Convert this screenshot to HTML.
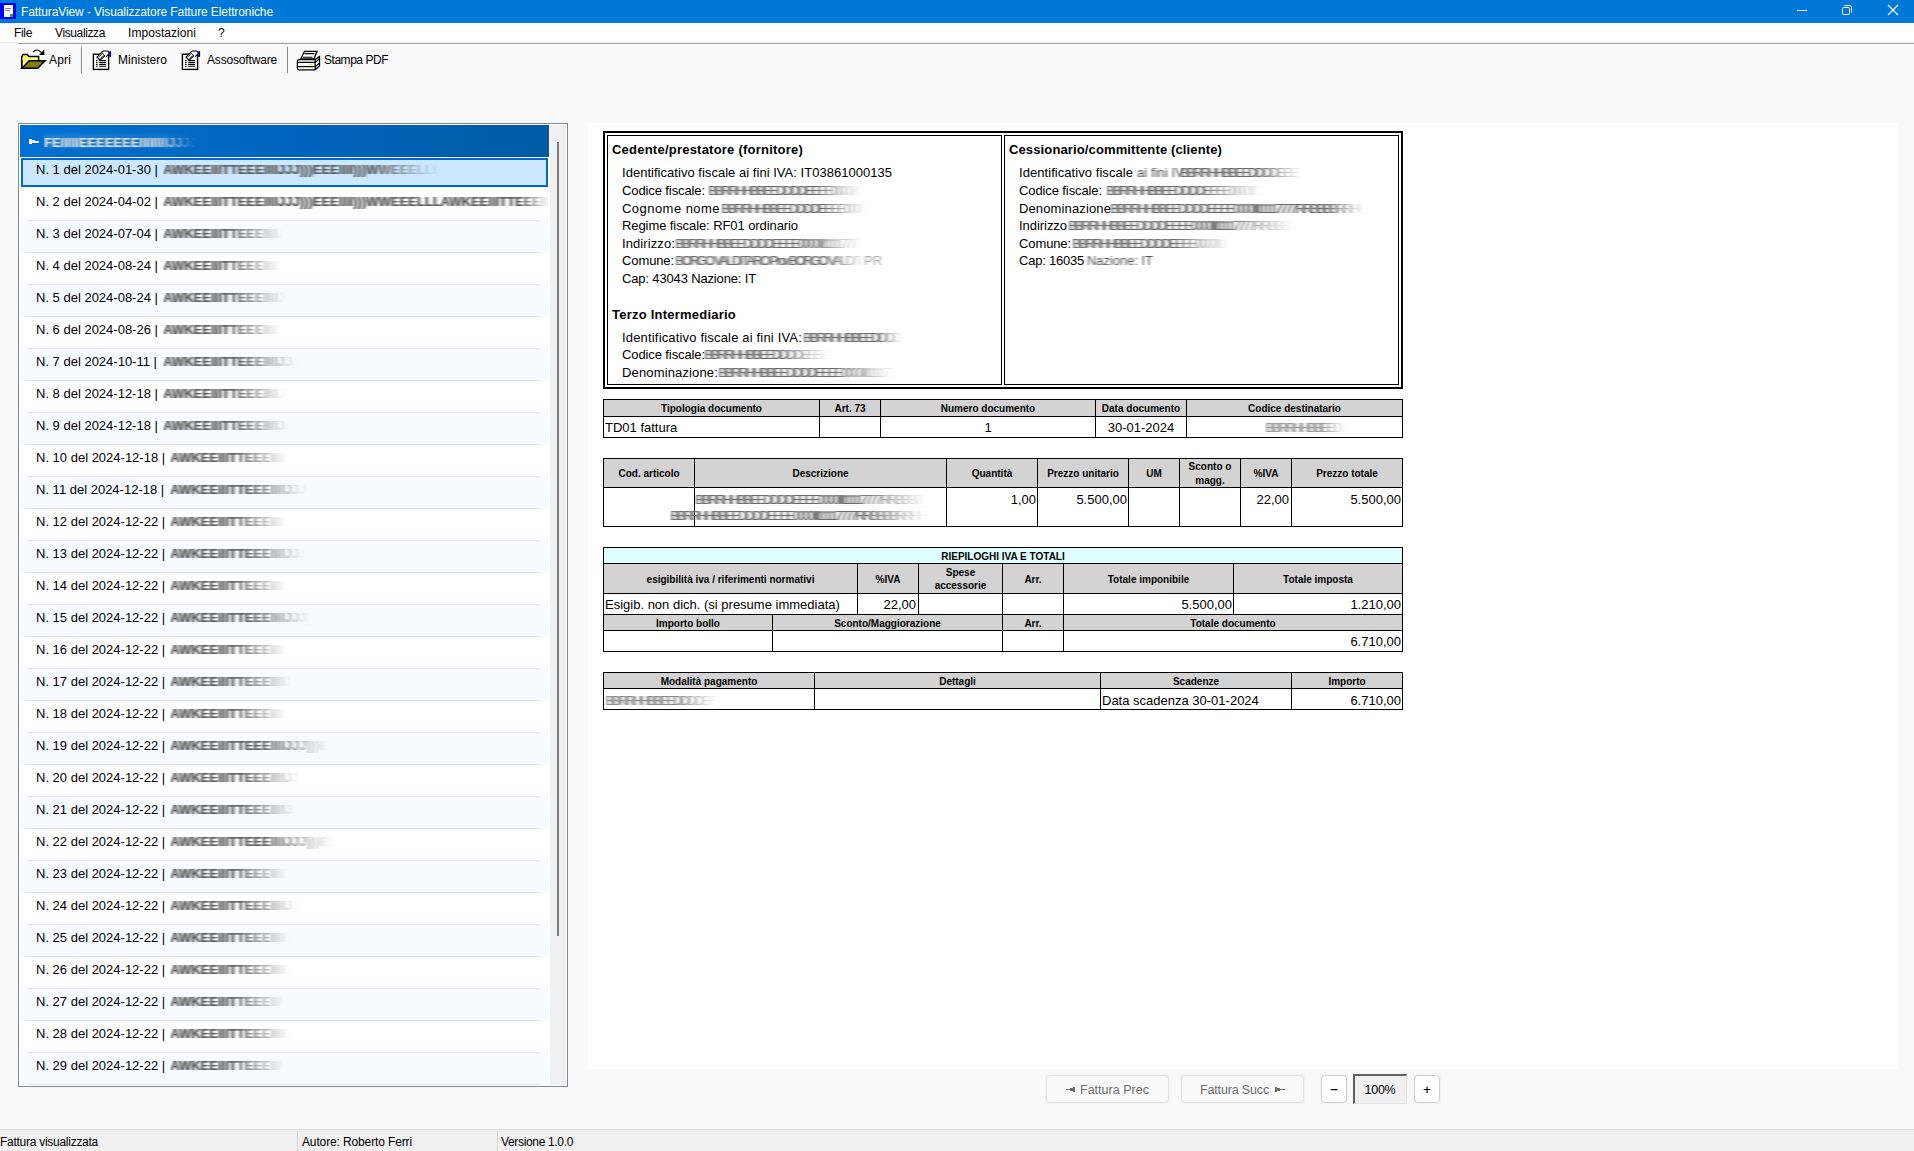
<!DOCTYPE html>
<html><head><meta charset="utf-8">
<style>
*{margin:0;padding:0;box-sizing:border-box}
html,body{width:1914px;height:1151px;overflow:hidden;background:#f9f9f9;font-family:"Liberation Sans", sans-serif;color:#000;position:relative}
.a{position:absolute}
.t{white-space:nowrap}
.bl{background:linear-gradient(to right,rgba(70,70,70,.75),rgba(90,90,90,.55) 70%,rgba(120,120,120,0));filter:blur(1.5px);border-radius:2px}
.blg{background:linear-gradient(to right,rgba(120,120,120,.45),rgba(140,140,140,.35) 75%,rgba(160,160,160,0));filter:blur(1.5px)}
.blw{background:linear-gradient(to right,rgba(255,255,255,.8),rgba(255,255,255,.5) 70%,rgba(255,255,255,0));filter:blur(2px)}
</style></head><body>
<svg width="0" height="0" style="position:absolute"><defs>
<filter id="hb1" x="-20%" y="-50%" width="140%" height="200%"><feGaussianBlur stdDeviation="1.4 0.25"/></filter>
<filter id="hb0" x="-20%" y="-50%" width="140%" height="200%"><feGaussianBlur stdDeviation="0.8 0.2"/></filter>
<filter id="hb3" x="-20%" y="-50%" width="140%" height="200%"><feGaussianBlur stdDeviation="1.0 0.1"/></filter>
<filter id="hb2" x="-20%" y="-50%" width="140%" height="200%"><feGaussianBlur stdDeviation="2.5 0.5"/></filter>
</defs></svg>
<div class="a" style="left:0px;top:0px;width:1914px;height:23px;background:#0078d7"></div>
<div class="a" style="left:0px;top:3px;width:16px;height:16px;background:#0000ff"></div>
<div class="a" style="left:4px;top:5px;width:9px;height:12px;background:#fff"></div>
<div class="a" style="left:5px;top:8px;width:6px;height:1px;background:#8080ff"></div>
<div class="a" style="left:5px;top:10px;width:5px;height:1px;background:#8080ff"></div>
<div class="a" style="left:10px;top:14px;width:3px;height:3px;background:#1d8a5a;border-radius:1px"></div>
<div class="a t" style="left:21.00px;top:5.84px;font-size:12px;line-height:12px;color:#fff;letter-spacing:-0.102px;">FatturaView - Visualizzatore Fatture Elettroniche</div>
<svg class="a" style="left:1780px;top:0px" width="134" height="23" viewBox="1780 0 134 23"><rect x="1797" y="10" width="10" height="1" fill="#fff"/><rect x="1842.5" y="7.5" width="7" height="7" rx="1.2" fill="none" stroke="#fff" stroke-width="1"/><path d="M1844.5 5.5 h5 a2 2 0 0 1 2 2 v5" fill="none" stroke="#fff" stroke-width="1"/><path d="M1888 5 L1898 15 M1898 5 L1888 15" stroke="#fff" stroke-width="1.1"/></svg>
<div class="a" style="left:0px;top:23px;width:1914px;height:19px;background:#fff"></div>
<div class="a t" style="left:14.00px;top:26.84px;font-size:12px;line-height:12px;color:#000;letter-spacing:-0.336px;">File</div>
<div class="a t" style="left:55.00px;top:26.84px;font-size:12px;line-height:12px;color:#000;letter-spacing:-0.381px;">Visualizza</div>
<div class="a t" style="left:128.00px;top:26.84px;font-size:12px;line-height:12px;color:#000;letter-spacing:0.052px;">Impostazioni</div>
<div class="a t" style="left:218.00px;top:26.84px;font-size:12px;line-height:12px;color:#000;">?</div>
<div class="a" style="left:0px;top:42px;width:1914px;height:1px;background:#f0f0f0"></div>
<div class="a" style="left:18px;top:43px;width:1896px;height:1px;background:#a0a0a0"></div>
<div class="a" style="left:18px;top:44px;width:1896px;height:1px;background:#fff"></div>
<svg class="a" style="left:18px;top:46px" width="30" height="26" viewBox="18 46 30 26">
<defs><pattern id="chk" x="0" y="0" width="2" height="2" patternUnits="userSpaceOnUse"><rect width="2" height="2" fill="#ffff00"/><rect width="1" height="1" fill="#fff"/><rect x="1" y="1" width="1" height="1" fill="#fff"/></pattern></defs>
<path d="M21.7 68.5 V56.8 L23.2 54.4 H27.3 L28.8 56.4 H38.6 V60.5" fill="url(#chk)" stroke="#000" stroke-width="1.5"/>
<path d="M21.7 60 V68" stroke="#000" stroke-width="1.5"/>
<path d="M22 68.3 L29.2 60.8 H45 L37.7 68.3 Z" fill="#808000" stroke="#000" stroke-width="1.6" stroke-linejoin="miter"/>
<path d="M33 52.2 Q37 47.6 41.5 52.6" fill="none" stroke="#000" stroke-width="1.2"/>
<path d="M39 54.9 L44.3 49.6 V54.9 Z" fill="#000"/>
</svg>
<div class="a t" style="left:49.00px;top:53.84px;font-size:12px;line-height:12px;color:#000;letter-spacing:0.164px;">Apri</div>
<div class="a" style="left:81px;top:47px;width:1px;height:26px;background:#8c8c8c"></div>
<svg class="a" style="left:92px;top:48px" width="22" height="24" viewBox="0 -2 22 24">
<rect x="1.4" y="4.2" width="15.2" height="15.2" fill="#fff" stroke="#000" stroke-width="1.4"/>
<path d="M4 10.6 h1.6 M7.2 10.6 h6.8 M4 12.5 h1.6 M7.2 12.5 h6.8 M4 14.4 h1.6 M7.2 14.4 h6.8 M4 16.3 h1.6 M7.2 16.3 h6.8" stroke="#000" stroke-width="1.1"/>
<path d="M5 7.2 L9.8 2.4 L13 5.6 L8.2 10.2 Z" fill="#fff" stroke="#000" stroke-width="1.1"/>
<path d="M6.8 7 L9.8 4 M8.3 8.5 L11.3 5.5" stroke="#000" stroke-width="0.8"/>
<path d="M9.8 2.4 L11.2 1 H15.8 L17 2.4 V3.8 L14.2 6.6" fill="#fff" stroke="#000" stroke-width="1.1"/>
<rect x="17.2" y="1.2" width="1.9" height="5.7" fill="#00007f"/>
</svg>
<div class="a t" style="left:118.00px;top:53.84px;font-size:12px;line-height:12px;color:#000;letter-spacing:0.035px;">Ministero</div>
<svg class="a" style="left:181px;top:48px" width="22" height="24" viewBox="0 -2 22 24">
<rect x="1.4" y="4.2" width="15.2" height="15.2" fill="#fff" stroke="#000" stroke-width="1.4"/>
<path d="M4 10.6 h1.6 M7.2 10.6 h6.8 M4 12.5 h1.6 M7.2 12.5 h6.8 M4 14.4 h1.6 M7.2 14.4 h6.8 M4 16.3 h1.6 M7.2 16.3 h6.8" stroke="#000" stroke-width="1.1"/>
<path d="M5 7.2 L9.8 2.4 L13 5.6 L8.2 10.2 Z" fill="#fff" stroke="#000" stroke-width="1.1"/>
<path d="M6.8 7 L9.8 4 M8.3 8.5 L11.3 5.5" stroke="#000" stroke-width="0.8"/>
<path d="M9.8 2.4 L11.2 1 H15.8 L17 2.4 V3.8 L14.2 6.6" fill="#fff" stroke="#000" stroke-width="1.1"/>
<rect x="17.2" y="1.2" width="1.9" height="5.7" fill="#00007f"/>
</svg>
<div class="a t" style="left:207.00px;top:53.84px;font-size:12px;line-height:12px;color:#000;letter-spacing:-0.169px;">Assosoftware</div>
<div class="a" style="left:287px;top:47px;width:1px;height:26px;background:#8c8c8c"></div>
<svg class="a" style="left:294px;top:48px" width="30" height="25" viewBox="294 48 30 25">
<path d="M304.5 51.3 H317 L314 58.8 H300.8 Z" fill="#fff" stroke="#000" stroke-width="1.3"/>
<path d="M304.5 53.6 H314.5 M303 57.3 H312.5" stroke="#000" stroke-width="1.1"/>
<path d="M299 59.6 H315.2 L319.5 56.5 V66 L315 69.8 H299 Q297.4 69.8 297.4 68 V61.4 Q297.4 59.6 299 59.6 Z" fill="#fff" stroke="#000" stroke-width="1.3"/>
<path d="M297.4 62.4 H315.2 L319.5 58.8 M297.4 66.6 H315.2 L319.5 63 M315.2 59.6 V69.8" fill="none" stroke="#000" stroke-width="1.2"/>
<rect x="309.2" y="63.8" width="2.9" height="1.1" fill="#e0e000"/>
</svg>
<div class="a t" style="left:324.00px;top:53.84px;font-size:12px;line-height:12px;color:#000;letter-spacing:-0.470px;">Stampa PDF</div>
<div class="a" style="left:18px;top:123px;width:550px;height:964px;border:1px solid #828790;background:#fff"></div>
<div class="a" style="left:550px;top:125px;width:16px;height:960px;background:#f0f0f0"></div>
<div class="a" style="left:557px;top:142px;width:2px;height:794px;background:#7a7a7a"></div>
<div class="a" style="left:21px;top:158px;width:527px;height:29px;border:2px solid #0067cc;background:#cce8ff"></div>
<div class="a t" style="left:36.00px;top:163.00px;font-size:13px;line-height:13px;color:#000;">N. 1 del 2024-01-30 |</div>
<div class="a" style="left:163px;top:159.00px;width:277px;height:21px;overflow:hidden;-webkit-mask-image:linear-gradient(to right,#000 75%,transparent)"><div class="a t" style="left:0;top:4px;font-size:13px;line-height:13px;font-weight:bold;color:#5e5e5e;letter-spacing:0px;text-shadow:1.5px 0 0 rgba(90,90,90,.35),3px 0 0 rgba(110,110,110,.18);filter:url(#hb0)">AWKEEIIITTEEEIIIIJJJ)))EEEIIII)))WWEEELLLAWKEEIIITTEEEIIIIJJJ)))EEEIIII)))WWEEELLLAWKEEIIITTEEEIIIIJJJ)))EEEIIII)))WWEEELLLAWKEEIIITTEEEIIIIJJJ)))EEEIIII)))WWEEELLLAWKEEIIITTEEEIIIIJJJ)))EEEIIII)))WWEEELLLAWKEEIIITTEEEIIIIJJJ)))EEEIIII)))WWEEELLLAWKEEIIITTEEEIIIIJJJ)))EEEIIII)))WWEEELLLAWKEEIIITTEEEIIIIJJJ)))EEEIIII)))WWEEELLLAWKEEIIITTEEEIIIIJJJ)))EEEIIII)))WWEEELLLAWKEEIIITTEEEIIIIJJJ)))EEEIIII)))WWEEELLLAWKEEIIITTEEEIIIIJJJ)))EEEIIII)))WWEEELLLAWKEEIIITTEEEIIIIJJJ)))EEEIIII)))WWEEELLLAWKEEIIITTEEEIIIIJJJ)))EEEIIII)))WWEEELLLAWKEEIIITTEEEIIIIJJJ)))EEEIIII)))WWEEELLLAWKEEIIITTEEEIIIIJJJ)))EEEIIII)))WWEEELLLAWKEEIIITTEEEIIIIJJJ)))EEEIIII)))WWEEELLLAWKEEIIITTEEEIIIIJJJ)))EEEIIII)))WWEEELLLAWKEEIIITTEEEIIIIJJJ)))EEEIIII)))WWEEELLLAWKEEIIITTEEEIIIIJJJ)))EEEIIII)))WWEEELLLAWKEEIIITTEEEIIIIJJJ)))EEEIIII)))WWEEELLL</div></div>
<div class="a" style="left:28px;top:220px;width:513px;height:1px;background:#e3e3e3"></div>
<div class="a t" style="left:36.00px;top:195.00px;font-size:13px;line-height:13px;color:#000;">N. 2 del 2024-04-02 |</div>
<div class="a" style="left:163px;top:191.00px;width:387px;height:21px;overflow:hidden;-webkit-mask-image:linear-gradient(to right,#000 92%,transparent)"><div class="a t" style="left:0;top:4px;font-size:13px;line-height:13px;font-weight:bold;color:#5e5e5e;letter-spacing:0px;text-shadow:1.5px 0 0 rgba(90,90,90,.35),3px 0 0 rgba(110,110,110,.18);filter:url(#hb0)">AWKEEIIITTEEEIIIIJJJ)))EEEIIII)))WWEEELLLAWKEEIIITTEEEIIIIJJJ)))EEEIIII)))WWEEELLLAWKEEIIITTEEEIIIIJJJ)))EEEIIII)))WWEEELLLAWKEEIIITTEEEIIIIJJJ)))EEEIIII)))WWEEELLLAWKEEIIITTEEEIIIIJJJ)))EEEIIII)))WWEEELLLAWKEEIIITTEEEIIIIJJJ)))EEEIIII)))WWEEELLLAWKEEIIITTEEEIIIIJJJ)))EEEIIII)))WWEEELLLAWKEEIIITTEEEIIIIJJJ)))EEEIIII)))WWEEELLLAWKEEIIITTEEEIIIIJJJ)))EEEIIII)))WWEEELLLAWKEEIIITTEEEIIIIJJJ)))EEEIIII)))WWEEELLLAWKEEIIITTEEEIIIIJJJ)))EEEIIII)))WWEEELLLAWKEEIIITTEEEIIIIJJJ)))EEEIIII)))WWEEELLLAWKEEIIITTEEEIIIIJJJ)))EEEIIII)))WWEEELLLAWKEEIIITTEEEIIIIJJJ)))EEEIIII)))WWEEELLLAWKEEIIITTEEEIIIIJJJ)))EEEIIII)))WWEEELLLAWKEEIIITTEEEIIIIJJJ)))EEEIIII)))WWEEELLLAWKEEIIITTEEEIIIIJJJ)))EEEIIII)))WWEEELLLAWKEEIIITTEEEIIIIJJJ)))EEEIIII)))WWEEELLLAWKEEIIITTEEEIIIIJJJ)))EEEIIII)))WWEEELLLAWKEEIIITTEEEIIIIJJJ)))EEEIIII)))WWEEELLL</div></div>
<div class="a" style="left:20px;top:221px;width:529px;height:32px;background:#f7faff"></div>
<div class="a" style="left:28px;top:252px;width:513px;height:1px;background:#e3e3e3"></div>
<div class="a t" style="left:36.00px;top:227.00px;font-size:13px;line-height:13px;color:#000;">N. 3 del 2024-07-04 |</div>
<div class="a" style="left:163px;top:223.00px;width:120px;height:21px;overflow:hidden;-webkit-mask-image:linear-gradient(to right,#000 55%,transparent)"><div class="a t" style="left:0;top:4px;font-size:13px;line-height:13px;font-weight:bold;color:#5e5e5e;letter-spacing:0px;text-shadow:1.5px 0 0 rgba(90,90,90,.35),3px 0 0 rgba(110,110,110,.18);filter:url(#hb0)">AWKEEIIITTEEEIIIIJJJ)))EEEIIII)))WWEEELLLAWKEEIIITTEEEIIIIJJJ)))EEEIIII)))WWEEELLLAWKEEIIITTEEEIIIIJJJ)))EEEIIII)))WWEEELLLAWKEEIIITTEEEIIIIJJJ)))EEEIIII)))WWEEELLLAWKEEIIITTEEEIIIIJJJ)))EEEIIII)))WWEEELLLAWKEEIIITTEEEIIIIJJJ)))EEEIIII)))WWEEELLLAWKEEIIITTEEEIIIIJJJ)))EEEIIII)))WWEEELLLAWKEEIIITTEEEIIIIJJJ)))EEEIIII)))WWEEELLLAWKEEIIITTEEEIIIIJJJ)))EEEIIII)))WWEEELLLAWKEEIIITTEEEIIIIJJJ)))EEEIIII)))WWEEELLLAWKEEIIITTEEEIIIIJJJ)))EEEIIII)))WWEEELLLAWKEEIIITTEEEIIIIJJJ)))EEEIIII)))WWEEELLLAWKEEIIITTEEEIIIIJJJ)))EEEIIII)))WWEEELLLAWKEEIIITTEEEIIIIJJJ)))EEEIIII)))WWEEELLLAWKEEIIITTEEEIIIIJJJ)))EEEIIII)))WWEEELLLAWKEEIIITTEEEIIIIJJJ)))EEEIIII)))WWEEELLLAWKEEIIITTEEEIIIIJJJ)))EEEIIII)))WWEEELLLAWKEEIIITTEEEIIIIJJJ)))EEEIIII)))WWEEELLLAWKEEIIITTEEEIIIIJJJ)))EEEIIII)))WWEEELLLAWKEEIIITTEEEIIIIJJJ)))EEEIIII)))WWEEELLL</div></div>
<div class="a" style="left:28px;top:284px;width:513px;height:1px;background:#e3e3e3"></div>
<div class="a t" style="left:36.00px;top:259.00px;font-size:13px;line-height:13px;color:#000;">N. 4 del 2024-08-24 |</div>
<div class="a" style="left:163px;top:255.00px;width:117px;height:21px;overflow:hidden;-webkit-mask-image:linear-gradient(to right,#000 55%,transparent)"><div class="a t" style="left:0;top:4px;font-size:13px;line-height:13px;font-weight:bold;color:#5e5e5e;letter-spacing:0px;text-shadow:1.5px 0 0 rgba(90,90,90,.35),3px 0 0 rgba(110,110,110,.18);filter:url(#hb0)">AWKEEIIITTEEEIIIIJJJ)))EEEIIII)))WWEEELLLAWKEEIIITTEEEIIIIJJJ)))EEEIIII)))WWEEELLLAWKEEIIITTEEEIIIIJJJ)))EEEIIII)))WWEEELLLAWKEEIIITTEEEIIIIJJJ)))EEEIIII)))WWEEELLLAWKEEIIITTEEEIIIIJJJ)))EEEIIII)))WWEEELLLAWKEEIIITTEEEIIIIJJJ)))EEEIIII)))WWEEELLLAWKEEIIITTEEEIIIIJJJ)))EEEIIII)))WWEEELLLAWKEEIIITTEEEIIIIJJJ)))EEEIIII)))WWEEELLLAWKEEIIITTEEEIIIIJJJ)))EEEIIII)))WWEEELLLAWKEEIIITTEEEIIIIJJJ)))EEEIIII)))WWEEELLLAWKEEIIITTEEEIIIIJJJ)))EEEIIII)))WWEEELLLAWKEEIIITTEEEIIIIJJJ)))EEEIIII)))WWEEELLLAWKEEIIITTEEEIIIIJJJ)))EEEIIII)))WWEEELLLAWKEEIIITTEEEIIIIJJJ)))EEEIIII)))WWEEELLLAWKEEIIITTEEEIIIIJJJ)))EEEIIII)))WWEEELLLAWKEEIIITTEEEIIIIJJJ)))EEEIIII)))WWEEELLLAWKEEIIITTEEEIIIIJJJ)))EEEIIII)))WWEEELLLAWKEEIIITTEEEIIIIJJJ)))EEEIIII)))WWEEELLLAWKEEIIITTEEEIIIIJJJ)))EEEIIII)))WWEEELLLAWKEEIIITTEEEIIIIJJJ)))EEEIIII)))WWEEELLL</div></div>
<div class="a" style="left:20px;top:285px;width:529px;height:32px;background:#f7faff"></div>
<div class="a" style="left:28px;top:316px;width:513px;height:1px;background:#e3e3e3"></div>
<div class="a t" style="left:36.00px;top:291.00px;font-size:13px;line-height:13px;color:#000;">N. 5 del 2024-08-24 |</div>
<div class="a" style="left:163px;top:287.00px;width:122px;height:21px;overflow:hidden;-webkit-mask-image:linear-gradient(to right,#000 55%,transparent)"><div class="a t" style="left:0;top:4px;font-size:13px;line-height:13px;font-weight:bold;color:#5e5e5e;letter-spacing:0px;text-shadow:1.5px 0 0 rgba(90,90,90,.35),3px 0 0 rgba(110,110,110,.18);filter:url(#hb0)">AWKEEIIITTEEEIIIIJJJ)))EEEIIII)))WWEEELLLAWKEEIIITTEEEIIIIJJJ)))EEEIIII)))WWEEELLLAWKEEIIITTEEEIIIIJJJ)))EEEIIII)))WWEEELLLAWKEEIIITTEEEIIIIJJJ)))EEEIIII)))WWEEELLLAWKEEIIITTEEEIIIIJJJ)))EEEIIII)))WWEEELLLAWKEEIIITTEEEIIIIJJJ)))EEEIIII)))WWEEELLLAWKEEIIITTEEEIIIIJJJ)))EEEIIII)))WWEEELLLAWKEEIIITTEEEIIIIJJJ)))EEEIIII)))WWEEELLLAWKEEIIITTEEEIIIIJJJ)))EEEIIII)))WWEEELLLAWKEEIIITTEEEIIIIJJJ)))EEEIIII)))WWEEELLLAWKEEIIITTEEEIIIIJJJ)))EEEIIII)))WWEEELLLAWKEEIIITTEEEIIIIJJJ)))EEEIIII)))WWEEELLLAWKEEIIITTEEEIIIIJJJ)))EEEIIII)))WWEEELLLAWKEEIIITTEEEIIIIJJJ)))EEEIIII)))WWEEELLLAWKEEIIITTEEEIIIIJJJ)))EEEIIII)))WWEEELLLAWKEEIIITTEEEIIIIJJJ)))EEEIIII)))WWEEELLLAWKEEIIITTEEEIIIIJJJ)))EEEIIII)))WWEEELLLAWKEEIIITTEEEIIIIJJJ)))EEEIIII)))WWEEELLLAWKEEIIITTEEEIIIIJJJ)))EEEIIII)))WWEEELLLAWKEEIIITTEEEIIIIJJJ)))EEEIIII)))WWEEELLL</div></div>
<div class="a" style="left:28px;top:348px;width:513px;height:1px;background:#e3e3e3"></div>
<div class="a t" style="left:36.00px;top:323.00px;font-size:13px;line-height:13px;color:#000;">N. 6 del 2024-08-26 |</div>
<div class="a" style="left:163px;top:319.00px;width:117px;height:21px;overflow:hidden;-webkit-mask-image:linear-gradient(to right,#000 55%,transparent)"><div class="a t" style="left:0;top:4px;font-size:13px;line-height:13px;font-weight:bold;color:#5e5e5e;letter-spacing:0px;text-shadow:1.5px 0 0 rgba(90,90,90,.35),3px 0 0 rgba(110,110,110,.18);filter:url(#hb0)">AWKEEIIITTEEEIIIIJJJ)))EEEIIII)))WWEEELLLAWKEEIIITTEEEIIIIJJJ)))EEEIIII)))WWEEELLLAWKEEIIITTEEEIIIIJJJ)))EEEIIII)))WWEEELLLAWKEEIIITTEEEIIIIJJJ)))EEEIIII)))WWEEELLLAWKEEIIITTEEEIIIIJJJ)))EEEIIII)))WWEEELLLAWKEEIIITTEEEIIIIJJJ)))EEEIIII)))WWEEELLLAWKEEIIITTEEEIIIIJJJ)))EEEIIII)))WWEEELLLAWKEEIIITTEEEIIIIJJJ)))EEEIIII)))WWEEELLLAWKEEIIITTEEEIIIIJJJ)))EEEIIII)))WWEEELLLAWKEEIIITTEEEIIIIJJJ)))EEEIIII)))WWEEELLLAWKEEIIITTEEEIIIIJJJ)))EEEIIII)))WWEEELLLAWKEEIIITTEEEIIIIJJJ)))EEEIIII)))WWEEELLLAWKEEIIITTEEEIIIIJJJ)))EEEIIII)))WWEEELLLAWKEEIIITTEEEIIIIJJJ)))EEEIIII)))WWEEELLLAWKEEIIITTEEEIIIIJJJ)))EEEIIII)))WWEEELLLAWKEEIIITTEEEIIIIJJJ)))EEEIIII)))WWEEELLLAWKEEIIITTEEEIIIIJJJ)))EEEIIII)))WWEEELLLAWKEEIIITTEEEIIIIJJJ)))EEEIIII)))WWEEELLLAWKEEIIITTEEEIIIIJJJ)))EEEIIII)))WWEEELLLAWKEEIIITTEEEIIIIJJJ)))EEEIIII)))WWEEELLL</div></div>
<div class="a" style="left:20px;top:349px;width:529px;height:32px;background:#f7faff"></div>
<div class="a" style="left:28px;top:380px;width:513px;height:1px;background:#e3e3e3"></div>
<div class="a t" style="left:36.00px;top:355.00px;font-size:13px;line-height:13px;color:#000;">N. 7 del 2024-10-11 |</div>
<div class="a" style="left:163px;top:351.00px;width:135px;height:21px;overflow:hidden;-webkit-mask-image:linear-gradient(to right,#000 55%,transparent)"><div class="a t" style="left:0;top:4px;font-size:13px;line-height:13px;font-weight:bold;color:#5e5e5e;letter-spacing:0px;text-shadow:1.5px 0 0 rgba(90,90,90,.35),3px 0 0 rgba(110,110,110,.18);filter:url(#hb0)">AWKEEIIITTEEEIIIIJJJ)))EEEIIII)))WWEEELLLAWKEEIIITTEEEIIIIJJJ)))EEEIIII)))WWEEELLLAWKEEIIITTEEEIIIIJJJ)))EEEIIII)))WWEEELLLAWKEEIIITTEEEIIIIJJJ)))EEEIIII)))WWEEELLLAWKEEIIITTEEEIIIIJJJ)))EEEIIII)))WWEEELLLAWKEEIIITTEEEIIIIJJJ)))EEEIIII)))WWEEELLLAWKEEIIITTEEEIIIIJJJ)))EEEIIII)))WWEEELLLAWKEEIIITTEEEIIIIJJJ)))EEEIIII)))WWEEELLLAWKEEIIITTEEEIIIIJJJ)))EEEIIII)))WWEEELLLAWKEEIIITTEEEIIIIJJJ)))EEEIIII)))WWEEELLLAWKEEIIITTEEEIIIIJJJ)))EEEIIII)))WWEEELLLAWKEEIIITTEEEIIIIJJJ)))EEEIIII)))WWEEELLLAWKEEIIITTEEEIIIIJJJ)))EEEIIII)))WWEEELLLAWKEEIIITTEEEIIIIJJJ)))EEEIIII)))WWEEELLLAWKEEIIITTEEEIIIIJJJ)))EEEIIII)))WWEEELLLAWKEEIIITTEEEIIIIJJJ)))EEEIIII)))WWEEELLLAWKEEIIITTEEEIIIIJJJ)))EEEIIII)))WWEEELLLAWKEEIIITTEEEIIIIJJJ)))EEEIIII)))WWEEELLLAWKEEIIITTEEEIIIIJJJ)))EEEIIII)))WWEEELLLAWKEEIIITTEEEIIIIJJJ)))EEEIIII)))WWEEELLL</div></div>
<div class="a" style="left:28px;top:412px;width:513px;height:1px;background:#e3e3e3"></div>
<div class="a t" style="left:36.00px;top:387.00px;font-size:13px;line-height:13px;color:#000;">N. 8 del 2024-12-18 |</div>
<div class="a" style="left:163px;top:383.00px;width:123px;height:21px;overflow:hidden;-webkit-mask-image:linear-gradient(to right,#000 55%,transparent)"><div class="a t" style="left:0;top:4px;font-size:13px;line-height:13px;font-weight:bold;color:#5e5e5e;letter-spacing:0px;text-shadow:1.5px 0 0 rgba(90,90,90,.35),3px 0 0 rgba(110,110,110,.18);filter:url(#hb0)">AWKEEIIITTEEEIIIIJJJ)))EEEIIII)))WWEEELLLAWKEEIIITTEEEIIIIJJJ)))EEEIIII)))WWEEELLLAWKEEIIITTEEEIIIIJJJ)))EEEIIII)))WWEEELLLAWKEEIIITTEEEIIIIJJJ)))EEEIIII)))WWEEELLLAWKEEIIITTEEEIIIIJJJ)))EEEIIII)))WWEEELLLAWKEEIIITTEEEIIIIJJJ)))EEEIIII)))WWEEELLLAWKEEIIITTEEEIIIIJJJ)))EEEIIII)))WWEEELLLAWKEEIIITTEEEIIIIJJJ)))EEEIIII)))WWEEELLLAWKEEIIITTEEEIIIIJJJ)))EEEIIII)))WWEEELLLAWKEEIIITTEEEIIIIJJJ)))EEEIIII)))WWEEELLLAWKEEIIITTEEEIIIIJJJ)))EEEIIII)))WWEEELLLAWKEEIIITTEEEIIIIJJJ)))EEEIIII)))WWEEELLLAWKEEIIITTEEEIIIIJJJ)))EEEIIII)))WWEEELLLAWKEEIIITTEEEIIIIJJJ)))EEEIIII)))WWEEELLLAWKEEIIITTEEEIIIIJJJ)))EEEIIII)))WWEEELLLAWKEEIIITTEEEIIIIJJJ)))EEEIIII)))WWEEELLLAWKEEIIITTEEEIIIIJJJ)))EEEIIII)))WWEEELLLAWKEEIIITTEEEIIIIJJJ)))EEEIIII)))WWEEELLLAWKEEIIITTEEEIIIIJJJ)))EEEIIII)))WWEEELLLAWKEEIIITTEEEIIIIJJJ)))EEEIIII)))WWEEELLL</div></div>
<div class="a" style="left:20px;top:413px;width:529px;height:32px;background:#f7faff"></div>
<div class="a" style="left:28px;top:444px;width:513px;height:1px;background:#e3e3e3"></div>
<div class="a t" style="left:36.00px;top:419.00px;font-size:13px;line-height:13px;color:#000;">N. 9 del 2024-12-18 |</div>
<div class="a" style="left:163px;top:415.00px;width:126px;height:21px;overflow:hidden;-webkit-mask-image:linear-gradient(to right,#000 55%,transparent)"><div class="a t" style="left:0;top:4px;font-size:13px;line-height:13px;font-weight:bold;color:#5e5e5e;letter-spacing:0px;text-shadow:1.5px 0 0 rgba(90,90,90,.35),3px 0 0 rgba(110,110,110,.18);filter:url(#hb0)">AWKEEIIITTEEEIIIIJJJ)))EEEIIII)))WWEEELLLAWKEEIIITTEEEIIIIJJJ)))EEEIIII)))WWEEELLLAWKEEIIITTEEEIIIIJJJ)))EEEIIII)))WWEEELLLAWKEEIIITTEEEIIIIJJJ)))EEEIIII)))WWEEELLLAWKEEIIITTEEEIIIIJJJ)))EEEIIII)))WWEEELLLAWKEEIIITTEEEIIIIJJJ)))EEEIIII)))WWEEELLLAWKEEIIITTEEEIIIIJJJ)))EEEIIII)))WWEEELLLAWKEEIIITTEEEIIIIJJJ)))EEEIIII)))WWEEELLLAWKEEIIITTEEEIIIIJJJ)))EEEIIII)))WWEEELLLAWKEEIIITTEEEIIIIJJJ)))EEEIIII)))WWEEELLLAWKEEIIITTEEEIIIIJJJ)))EEEIIII)))WWEEELLLAWKEEIIITTEEEIIIIJJJ)))EEEIIII)))WWEEELLLAWKEEIIITTEEEIIIIJJJ)))EEEIIII)))WWEEELLLAWKEEIIITTEEEIIIIJJJ)))EEEIIII)))WWEEELLLAWKEEIIITTEEEIIIIJJJ)))EEEIIII)))WWEEELLLAWKEEIIITTEEEIIIIJJJ)))EEEIIII)))WWEEELLLAWKEEIIITTEEEIIIIJJJ)))EEEIIII)))WWEEELLLAWKEEIIITTEEEIIIIJJJ)))EEEIIII)))WWEEELLLAWKEEIIITTEEEIIIIJJJ)))EEEIIII)))WWEEELLLAWKEEIIITTEEEIIIIJJJ)))EEEIIII)))WWEEELLL</div></div>
<div class="a" style="left:28px;top:476px;width:513px;height:1px;background:#e3e3e3"></div>
<div class="a t" style="left:36.00px;top:451.00px;font-size:13px;line-height:13px;color:#000;">N. 10 del 2024-12-18 |</div>
<div class="a" style="left:170px;top:447.00px;width:117px;height:21px;overflow:hidden;-webkit-mask-image:linear-gradient(to right,#000 55%,transparent)"><div class="a t" style="left:0;top:4px;font-size:13px;line-height:13px;font-weight:bold;color:#5e5e5e;letter-spacing:0px;text-shadow:1.5px 0 0 rgba(90,90,90,.35),3px 0 0 rgba(110,110,110,.18);filter:url(#hb0)">AWKEEIIITTEEEIIIIJJJ)))EEEIIII)))WWEEELLLAWKEEIIITTEEEIIIIJJJ)))EEEIIII)))WWEEELLLAWKEEIIITTEEEIIIIJJJ)))EEEIIII)))WWEEELLLAWKEEIIITTEEEIIIIJJJ)))EEEIIII)))WWEEELLLAWKEEIIITTEEEIIIIJJJ)))EEEIIII)))WWEEELLLAWKEEIIITTEEEIIIIJJJ)))EEEIIII)))WWEEELLLAWKEEIIITTEEEIIIIJJJ)))EEEIIII)))WWEEELLLAWKEEIIITTEEEIIIIJJJ)))EEEIIII)))WWEEELLLAWKEEIIITTEEEIIIIJJJ)))EEEIIII)))WWEEELLLAWKEEIIITTEEEIIIIJJJ)))EEEIIII)))WWEEELLLAWKEEIIITTEEEIIIIJJJ)))EEEIIII)))WWEEELLLAWKEEIIITTEEEIIIIJJJ)))EEEIIII)))WWEEELLLAWKEEIIITTEEEIIIIJJJ)))EEEIIII)))WWEEELLLAWKEEIIITTEEEIIIIJJJ)))EEEIIII)))WWEEELLLAWKEEIIITTEEEIIIIJJJ)))EEEIIII)))WWEEELLLAWKEEIIITTEEEIIIIJJJ)))EEEIIII)))WWEEELLLAWKEEIIITTEEEIIIIJJJ)))EEEIIII)))WWEEELLLAWKEEIIITTEEEIIIIJJJ)))EEEIIII)))WWEEELLLAWKEEIIITTEEEIIIIJJJ)))EEEIIII)))WWEEELLLAWKEEIIITTEEEIIIIJJJ)))EEEIIII)))WWEEELLL</div></div>
<div class="a" style="left:20px;top:477px;width:529px;height:32px;background:#f7faff"></div>
<div class="a" style="left:28px;top:508px;width:513px;height:1px;background:#e3e3e3"></div>
<div class="a t" style="left:36.00px;top:483.00px;font-size:13px;line-height:13px;color:#000;">N. 11 del 2024-12-18 |</div>
<div class="a" style="left:170px;top:479.00px;width:137px;height:21px;overflow:hidden;-webkit-mask-image:linear-gradient(to right,#000 55%,transparent)"><div class="a t" style="left:0;top:4px;font-size:13px;line-height:13px;font-weight:bold;color:#5e5e5e;letter-spacing:0px;text-shadow:1.5px 0 0 rgba(90,90,90,.35),3px 0 0 rgba(110,110,110,.18);filter:url(#hb0)">AWKEEIIITTEEEIIIIJJJ)))EEEIIII)))WWEEELLLAWKEEIIITTEEEIIIIJJJ)))EEEIIII)))WWEEELLLAWKEEIIITTEEEIIIIJJJ)))EEEIIII)))WWEEELLLAWKEEIIITTEEEIIIIJJJ)))EEEIIII)))WWEEELLLAWKEEIIITTEEEIIIIJJJ)))EEEIIII)))WWEEELLLAWKEEIIITTEEEIIIIJJJ)))EEEIIII)))WWEEELLLAWKEEIIITTEEEIIIIJJJ)))EEEIIII)))WWEEELLLAWKEEIIITTEEEIIIIJJJ)))EEEIIII)))WWEEELLLAWKEEIIITTEEEIIIIJJJ)))EEEIIII)))WWEEELLLAWKEEIIITTEEEIIIIJJJ)))EEEIIII)))WWEEELLLAWKEEIIITTEEEIIIIJJJ)))EEEIIII)))WWEEELLLAWKEEIIITTEEEIIIIJJJ)))EEEIIII)))WWEEELLLAWKEEIIITTEEEIIIIJJJ)))EEEIIII)))WWEEELLLAWKEEIIITTEEEIIIIJJJ)))EEEIIII)))WWEEELLLAWKEEIIITTEEEIIIIJJJ)))EEEIIII)))WWEEELLLAWKEEIIITTEEEIIIIJJJ)))EEEIIII)))WWEEELLLAWKEEIIITTEEEIIIIJJJ)))EEEIIII)))WWEEELLLAWKEEIIITTEEEIIIIJJJ)))EEEIIII)))WWEEELLLAWKEEIIITTEEEIIIIJJJ)))EEEIIII)))WWEEELLLAWKEEIIITTEEEIIIIJJJ)))EEEIIII)))WWEEELLL</div></div>
<div class="a" style="left:28px;top:540px;width:513px;height:1px;background:#e3e3e3"></div>
<div class="a t" style="left:36.00px;top:515.00px;font-size:13px;line-height:13px;color:#000;">N. 12 del 2024-12-22 |</div>
<div class="a" style="left:170px;top:511.00px;width:116px;height:21px;overflow:hidden;-webkit-mask-image:linear-gradient(to right,#000 55%,transparent)"><div class="a t" style="left:0;top:4px;font-size:13px;line-height:13px;font-weight:bold;color:#5e5e5e;letter-spacing:0px;text-shadow:1.5px 0 0 rgba(90,90,90,.35),3px 0 0 rgba(110,110,110,.18);filter:url(#hb0)">AWKEEIIITTEEEIIIIJJJ)))EEEIIII)))WWEEELLLAWKEEIIITTEEEIIIIJJJ)))EEEIIII)))WWEEELLLAWKEEIIITTEEEIIIIJJJ)))EEEIIII)))WWEEELLLAWKEEIIITTEEEIIIIJJJ)))EEEIIII)))WWEEELLLAWKEEIIITTEEEIIIIJJJ)))EEEIIII)))WWEEELLLAWKEEIIITTEEEIIIIJJJ)))EEEIIII)))WWEEELLLAWKEEIIITTEEEIIIIJJJ)))EEEIIII)))WWEEELLLAWKEEIIITTEEEIIIIJJJ)))EEEIIII)))WWEEELLLAWKEEIIITTEEEIIIIJJJ)))EEEIIII)))WWEEELLLAWKEEIIITTEEEIIIIJJJ)))EEEIIII)))WWEEELLLAWKEEIIITTEEEIIIIJJJ)))EEEIIII)))WWEEELLLAWKEEIIITTEEEIIIIJJJ)))EEEIIII)))WWEEELLLAWKEEIIITTEEEIIIIJJJ)))EEEIIII)))WWEEELLLAWKEEIIITTEEEIIIIJJJ)))EEEIIII)))WWEEELLLAWKEEIIITTEEEIIIIJJJ)))EEEIIII)))WWEEELLLAWKEEIIITTEEEIIIIJJJ)))EEEIIII)))WWEEELLLAWKEEIIITTEEEIIIIJJJ)))EEEIIII)))WWEEELLLAWKEEIIITTEEEIIIIJJJ)))EEEIIII)))WWEEELLLAWKEEIIITTEEEIIIIJJJ)))EEEIIII)))WWEEELLLAWKEEIIITTEEEIIIIJJJ)))EEEIIII)))WWEEELLL</div></div>
<div class="a" style="left:20px;top:541px;width:529px;height:32px;background:#f7faff"></div>
<div class="a" style="left:28px;top:572px;width:513px;height:1px;background:#e3e3e3"></div>
<div class="a t" style="left:36.00px;top:547.00px;font-size:13px;line-height:13px;color:#000;">N. 13 del 2024-12-22 |</div>
<div class="a" style="left:170px;top:543.00px;width:135px;height:21px;overflow:hidden;-webkit-mask-image:linear-gradient(to right,#000 55%,transparent)"><div class="a t" style="left:0;top:4px;font-size:13px;line-height:13px;font-weight:bold;color:#5e5e5e;letter-spacing:0px;text-shadow:1.5px 0 0 rgba(90,90,90,.35),3px 0 0 rgba(110,110,110,.18);filter:url(#hb0)">AWKEEIIITTEEEIIIIJJJ)))EEEIIII)))WWEEELLLAWKEEIIITTEEEIIIIJJJ)))EEEIIII)))WWEEELLLAWKEEIIITTEEEIIIIJJJ)))EEEIIII)))WWEEELLLAWKEEIIITTEEEIIIIJJJ)))EEEIIII)))WWEEELLLAWKEEIIITTEEEIIIIJJJ)))EEEIIII)))WWEEELLLAWKEEIIITTEEEIIIIJJJ)))EEEIIII)))WWEEELLLAWKEEIIITTEEEIIIIJJJ)))EEEIIII)))WWEEELLLAWKEEIIITTEEEIIIIJJJ)))EEEIIII)))WWEEELLLAWKEEIIITTEEEIIIIJJJ)))EEEIIII)))WWEEELLLAWKEEIIITTEEEIIIIJJJ)))EEEIIII)))WWEEELLLAWKEEIIITTEEEIIIIJJJ)))EEEIIII)))WWEEELLLAWKEEIIITTEEEIIIIJJJ)))EEEIIII)))WWEEELLLAWKEEIIITTEEEIIIIJJJ)))EEEIIII)))WWEEELLLAWKEEIIITTEEEIIIIJJJ)))EEEIIII)))WWEEELLLAWKEEIIITTEEEIIIIJJJ)))EEEIIII)))WWEEELLLAWKEEIIITTEEEIIIIJJJ)))EEEIIII)))WWEEELLLAWKEEIIITTEEEIIIIJJJ)))EEEIIII)))WWEEELLLAWKEEIIITTEEEIIIIJJJ)))EEEIIII)))WWEEELLLAWKEEIIITTEEEIIIIJJJ)))EEEIIII)))WWEEELLLAWKEEIIITTEEEIIIIJJJ)))EEEIIII)))WWEEELLL</div></div>
<div class="a" style="left:28px;top:604px;width:513px;height:1px;background:#e3e3e3"></div>
<div class="a t" style="left:36.00px;top:579.00px;font-size:13px;line-height:13px;color:#000;">N. 14 del 2024-12-22 |</div>
<div class="a" style="left:170px;top:575.00px;width:116px;height:21px;overflow:hidden;-webkit-mask-image:linear-gradient(to right,#000 55%,transparent)"><div class="a t" style="left:0;top:4px;font-size:13px;line-height:13px;font-weight:bold;color:#5e5e5e;letter-spacing:0px;text-shadow:1.5px 0 0 rgba(90,90,90,.35),3px 0 0 rgba(110,110,110,.18);filter:url(#hb0)">AWKEEIIITTEEEIIIIJJJ)))EEEIIII)))WWEEELLLAWKEEIIITTEEEIIIIJJJ)))EEEIIII)))WWEEELLLAWKEEIIITTEEEIIIIJJJ)))EEEIIII)))WWEEELLLAWKEEIIITTEEEIIIIJJJ)))EEEIIII)))WWEEELLLAWKEEIIITTEEEIIIIJJJ)))EEEIIII)))WWEEELLLAWKEEIIITTEEEIIIIJJJ)))EEEIIII)))WWEEELLLAWKEEIIITTEEEIIIIJJJ)))EEEIIII)))WWEEELLLAWKEEIIITTEEEIIIIJJJ)))EEEIIII)))WWEEELLLAWKEEIIITTEEEIIIIJJJ)))EEEIIII)))WWEEELLLAWKEEIIITTEEEIIIIJJJ)))EEEIIII)))WWEEELLLAWKEEIIITTEEEIIIIJJJ)))EEEIIII)))WWEEELLLAWKEEIIITTEEEIIIIJJJ)))EEEIIII)))WWEEELLLAWKEEIIITTEEEIIIIJJJ)))EEEIIII)))WWEEELLLAWKEEIIITTEEEIIIIJJJ)))EEEIIII)))WWEEELLLAWKEEIIITTEEEIIIIJJJ)))EEEIIII)))WWEEELLLAWKEEIIITTEEEIIIIJJJ)))EEEIIII)))WWEEELLLAWKEEIIITTEEEIIIIJJJ)))EEEIIII)))WWEEELLLAWKEEIIITTEEEIIIIJJJ)))EEEIIII)))WWEEELLLAWKEEIIITTEEEIIIIJJJ)))EEEIIII)))WWEEELLLAWKEEIIITTEEEIIIIJJJ)))EEEIIII)))WWEEELLL</div></div>
<div class="a" style="left:20px;top:605px;width:529px;height:32px;background:#f7faff"></div>
<div class="a" style="left:28px;top:636px;width:513px;height:1px;background:#e3e3e3"></div>
<div class="a t" style="left:36.00px;top:611.00px;font-size:13px;line-height:13px;color:#000;">N. 15 del 2024-12-22 |</div>
<div class="a" style="left:170px;top:607.00px;width:141px;height:21px;overflow:hidden;-webkit-mask-image:linear-gradient(to right,#000 55%,transparent)"><div class="a t" style="left:0;top:4px;font-size:13px;line-height:13px;font-weight:bold;color:#5e5e5e;letter-spacing:0px;text-shadow:1.5px 0 0 rgba(90,90,90,.35),3px 0 0 rgba(110,110,110,.18);filter:url(#hb0)">AWKEEIIITTEEEIIIIJJJ)))EEEIIII)))WWEEELLLAWKEEIIITTEEEIIIIJJJ)))EEEIIII)))WWEEELLLAWKEEIIITTEEEIIIIJJJ)))EEEIIII)))WWEEELLLAWKEEIIITTEEEIIIIJJJ)))EEEIIII)))WWEEELLLAWKEEIIITTEEEIIIIJJJ)))EEEIIII)))WWEEELLLAWKEEIIITTEEEIIIIJJJ)))EEEIIII)))WWEEELLLAWKEEIIITTEEEIIIIJJJ)))EEEIIII)))WWEEELLLAWKEEIIITTEEEIIIIJJJ)))EEEIIII)))WWEEELLLAWKEEIIITTEEEIIIIJJJ)))EEEIIII)))WWEEELLLAWKEEIIITTEEEIIIIJJJ)))EEEIIII)))WWEEELLLAWKEEIIITTEEEIIIIJJJ)))EEEIIII)))WWEEELLLAWKEEIIITTEEEIIIIJJJ)))EEEIIII)))WWEEELLLAWKEEIIITTEEEIIIIJJJ)))EEEIIII)))WWEEELLLAWKEEIIITTEEEIIIIJJJ)))EEEIIII)))WWEEELLLAWKEEIIITTEEEIIIIJJJ)))EEEIIII)))WWEEELLLAWKEEIIITTEEEIIIIJJJ)))EEEIIII)))WWEEELLLAWKEEIIITTEEEIIIIJJJ)))EEEIIII)))WWEEELLLAWKEEIIITTEEEIIIIJJJ)))EEEIIII)))WWEEELLLAWKEEIIITTEEEIIIIJJJ)))EEEIIII)))WWEEELLLAWKEEIIITTEEEIIIIJJJ)))EEEIIII)))WWEEELLL</div></div>
<div class="a" style="left:28px;top:668px;width:513px;height:1px;background:#e3e3e3"></div>
<div class="a t" style="left:36.00px;top:643.00px;font-size:13px;line-height:13px;color:#000;">N. 16 del 2024-12-22 |</div>
<div class="a" style="left:170px;top:639.00px;width:116px;height:21px;overflow:hidden;-webkit-mask-image:linear-gradient(to right,#000 55%,transparent)"><div class="a t" style="left:0;top:4px;font-size:13px;line-height:13px;font-weight:bold;color:#5e5e5e;letter-spacing:0px;text-shadow:1.5px 0 0 rgba(90,90,90,.35),3px 0 0 rgba(110,110,110,.18);filter:url(#hb0)">AWKEEIIITTEEEIIIIJJJ)))EEEIIII)))WWEEELLLAWKEEIIITTEEEIIIIJJJ)))EEEIIII)))WWEEELLLAWKEEIIITTEEEIIIIJJJ)))EEEIIII)))WWEEELLLAWKEEIIITTEEEIIIIJJJ)))EEEIIII)))WWEEELLLAWKEEIIITTEEEIIIIJJJ)))EEEIIII)))WWEEELLLAWKEEIIITTEEEIIIIJJJ)))EEEIIII)))WWEEELLLAWKEEIIITTEEEIIIIJJJ)))EEEIIII)))WWEEELLLAWKEEIIITTEEEIIIIJJJ)))EEEIIII)))WWEEELLLAWKEEIIITTEEEIIIIJJJ)))EEEIIII)))WWEEELLLAWKEEIIITTEEEIIIIJJJ)))EEEIIII)))WWEEELLLAWKEEIIITTEEEIIIIJJJ)))EEEIIII)))WWEEELLLAWKEEIIITTEEEIIIIJJJ)))EEEIIII)))WWEEELLLAWKEEIIITTEEEIIIIJJJ)))EEEIIII)))WWEEELLLAWKEEIIITTEEEIIIIJJJ)))EEEIIII)))WWEEELLLAWKEEIIITTEEEIIIIJJJ)))EEEIIII)))WWEEELLLAWKEEIIITTEEEIIIIJJJ)))EEEIIII)))WWEEELLLAWKEEIIITTEEEIIIIJJJ)))EEEIIII)))WWEEELLLAWKEEIIITTEEEIIIIJJJ)))EEEIIII)))WWEEELLLAWKEEIIITTEEEIIIIJJJ)))EEEIIII)))WWEEELLLAWKEEIIITTEEEIIIIJJJ)))EEEIIII)))WWEEELLL</div></div>
<div class="a" style="left:20px;top:669px;width:529px;height:32px;background:#f7faff"></div>
<div class="a" style="left:28px;top:700px;width:513px;height:1px;background:#e3e3e3"></div>
<div class="a t" style="left:36.00px;top:675.00px;font-size:13px;line-height:13px;color:#000;">N. 17 del 2024-12-22 |</div>
<div class="a" style="left:170px;top:671.00px;width:121px;height:21px;overflow:hidden;-webkit-mask-image:linear-gradient(to right,#000 55%,transparent)"><div class="a t" style="left:0;top:4px;font-size:13px;line-height:13px;font-weight:bold;color:#5e5e5e;letter-spacing:0px;text-shadow:1.5px 0 0 rgba(90,90,90,.35),3px 0 0 rgba(110,110,110,.18);filter:url(#hb0)">AWKEEIIITTEEEIIIIJJJ)))EEEIIII)))WWEEELLLAWKEEIIITTEEEIIIIJJJ)))EEEIIII)))WWEEELLLAWKEEIIITTEEEIIIIJJJ)))EEEIIII)))WWEEELLLAWKEEIIITTEEEIIIIJJJ)))EEEIIII)))WWEEELLLAWKEEIIITTEEEIIIIJJJ)))EEEIIII)))WWEEELLLAWKEEIIITTEEEIIIIJJJ)))EEEIIII)))WWEEELLLAWKEEIIITTEEEIIIIJJJ)))EEEIIII)))WWEEELLLAWKEEIIITTEEEIIIIJJJ)))EEEIIII)))WWEEELLLAWKEEIIITTEEEIIIIJJJ)))EEEIIII)))WWEEELLLAWKEEIIITTEEEIIIIJJJ)))EEEIIII)))WWEEELLLAWKEEIIITTEEEIIIIJJJ)))EEEIIII)))WWEEELLLAWKEEIIITTEEEIIIIJJJ)))EEEIIII)))WWEEELLLAWKEEIIITTEEEIIIIJJJ)))EEEIIII)))WWEEELLLAWKEEIIITTEEEIIIIJJJ)))EEEIIII)))WWEEELLLAWKEEIIITTEEEIIIIJJJ)))EEEIIII)))WWEEELLLAWKEEIIITTEEEIIIIJJJ)))EEEIIII)))WWEEELLLAWKEEIIITTEEEIIIIJJJ)))EEEIIII)))WWEEELLLAWKEEIIITTEEEIIIIJJJ)))EEEIIII)))WWEEELLLAWKEEIIITTEEEIIIIJJJ)))EEEIIII)))WWEEELLLAWKEEIIITTEEEIIIIJJJ)))EEEIIII)))WWEEELLL</div></div>
<div class="a" style="left:28px;top:732px;width:513px;height:1px;background:#e3e3e3"></div>
<div class="a t" style="left:36.00px;top:707.00px;font-size:13px;line-height:13px;color:#000;">N. 18 del 2024-12-22 |</div>
<div class="a" style="left:170px;top:703.00px;width:116px;height:21px;overflow:hidden;-webkit-mask-image:linear-gradient(to right,#000 55%,transparent)"><div class="a t" style="left:0;top:4px;font-size:13px;line-height:13px;font-weight:bold;color:#5e5e5e;letter-spacing:0px;text-shadow:1.5px 0 0 rgba(90,90,90,.35),3px 0 0 rgba(110,110,110,.18);filter:url(#hb0)">AWKEEIIITTEEEIIIIJJJ)))EEEIIII)))WWEEELLLAWKEEIIITTEEEIIIIJJJ)))EEEIIII)))WWEEELLLAWKEEIIITTEEEIIIIJJJ)))EEEIIII)))WWEEELLLAWKEEIIITTEEEIIIIJJJ)))EEEIIII)))WWEEELLLAWKEEIIITTEEEIIIIJJJ)))EEEIIII)))WWEEELLLAWKEEIIITTEEEIIIIJJJ)))EEEIIII)))WWEEELLLAWKEEIIITTEEEIIIIJJJ)))EEEIIII)))WWEEELLLAWKEEIIITTEEEIIIIJJJ)))EEEIIII)))WWEEELLLAWKEEIIITTEEEIIIIJJJ)))EEEIIII)))WWEEELLLAWKEEIIITTEEEIIIIJJJ)))EEEIIII)))WWEEELLLAWKEEIIITTEEEIIIIJJJ)))EEEIIII)))WWEEELLLAWKEEIIITTEEEIIIIJJJ)))EEEIIII)))WWEEELLLAWKEEIIITTEEEIIIIJJJ)))EEEIIII)))WWEEELLLAWKEEIIITTEEEIIIIJJJ)))EEEIIII)))WWEEELLLAWKEEIIITTEEEIIIIJJJ)))EEEIIII)))WWEEELLLAWKEEIIITTEEEIIIIJJJ)))EEEIIII)))WWEEELLLAWKEEIIITTEEEIIIIJJJ)))EEEIIII)))WWEEELLLAWKEEIIITTEEEIIIIJJJ)))EEEIIII)))WWEEELLLAWKEEIIITTEEEIIIIJJJ)))EEEIIII)))WWEEELLLAWKEEIIITTEEEIIIIJJJ)))EEEIIII)))WWEEELLL</div></div>
<div class="a" style="left:20px;top:733px;width:529px;height:32px;background:#f7faff"></div>
<div class="a" style="left:28px;top:764px;width:513px;height:1px;background:#e3e3e3"></div>
<div class="a t" style="left:36.00px;top:739.00px;font-size:13px;line-height:13px;color:#000;">N. 19 del 2024-12-22 |</div>
<div class="a" style="left:170px;top:735.00px;width:160px;height:21px;overflow:hidden;-webkit-mask-image:linear-gradient(to right,#000 55%,transparent)"><div class="a t" style="left:0;top:4px;font-size:13px;line-height:13px;font-weight:bold;color:#5e5e5e;letter-spacing:0px;text-shadow:1.5px 0 0 rgba(90,90,90,.35),3px 0 0 rgba(110,110,110,.18);filter:url(#hb0)">AWKEEIIITTEEEIIIIJJJ)))EEEIIII)))WWEEELLLAWKEEIIITTEEEIIIIJJJ)))EEEIIII)))WWEEELLLAWKEEIIITTEEEIIIIJJJ)))EEEIIII)))WWEEELLLAWKEEIIITTEEEIIIIJJJ)))EEEIIII)))WWEEELLLAWKEEIIITTEEEIIIIJJJ)))EEEIIII)))WWEEELLLAWKEEIIITTEEEIIIIJJJ)))EEEIIII)))WWEEELLLAWKEEIIITTEEEIIIIJJJ)))EEEIIII)))WWEEELLLAWKEEIIITTEEEIIIIJJJ)))EEEIIII)))WWEEELLLAWKEEIIITTEEEIIIIJJJ)))EEEIIII)))WWEEELLLAWKEEIIITTEEEIIIIJJJ)))EEEIIII)))WWEEELLLAWKEEIIITTEEEIIIIJJJ)))EEEIIII)))WWEEELLLAWKEEIIITTEEEIIIIJJJ)))EEEIIII)))WWEEELLLAWKEEIIITTEEEIIIIJJJ)))EEEIIII)))WWEEELLLAWKEEIIITTEEEIIIIJJJ)))EEEIIII)))WWEEELLLAWKEEIIITTEEEIIIIJJJ)))EEEIIII)))WWEEELLLAWKEEIIITTEEEIIIIJJJ)))EEEIIII)))WWEEELLLAWKEEIIITTEEEIIIIJJJ)))EEEIIII)))WWEEELLLAWKEEIIITTEEEIIIIJJJ)))EEEIIII)))WWEEELLLAWKEEIIITTEEEIIIIJJJ)))EEEIIII)))WWEEELLLAWKEEIIITTEEEIIIIJJJ)))EEEIIII)))WWEEELLL</div></div>
<div class="a" style="left:28px;top:796px;width:513px;height:1px;background:#e3e3e3"></div>
<div class="a t" style="left:36.00px;top:771.00px;font-size:13px;line-height:13px;color:#000;">N. 20 del 2024-12-22 |</div>
<div class="a" style="left:170px;top:767.00px;width:130px;height:21px;overflow:hidden;-webkit-mask-image:linear-gradient(to right,#000 55%,transparent)"><div class="a t" style="left:0;top:4px;font-size:13px;line-height:13px;font-weight:bold;color:#5e5e5e;letter-spacing:0px;text-shadow:1.5px 0 0 rgba(90,90,90,.35),3px 0 0 rgba(110,110,110,.18);filter:url(#hb0)">AWKEEIIITTEEEIIIIJJJ)))EEEIIII)))WWEEELLLAWKEEIIITTEEEIIIIJJJ)))EEEIIII)))WWEEELLLAWKEEIIITTEEEIIIIJJJ)))EEEIIII)))WWEEELLLAWKEEIIITTEEEIIIIJJJ)))EEEIIII)))WWEEELLLAWKEEIIITTEEEIIIIJJJ)))EEEIIII)))WWEEELLLAWKEEIIITTEEEIIIIJJJ)))EEEIIII)))WWEEELLLAWKEEIIITTEEEIIIIJJJ)))EEEIIII)))WWEEELLLAWKEEIIITTEEEIIIIJJJ)))EEEIIII)))WWEEELLLAWKEEIIITTEEEIIIIJJJ)))EEEIIII)))WWEEELLLAWKEEIIITTEEEIIIIJJJ)))EEEIIII)))WWEEELLLAWKEEIIITTEEEIIIIJJJ)))EEEIIII)))WWEEELLLAWKEEIIITTEEEIIIIJJJ)))EEEIIII)))WWEEELLLAWKEEIIITTEEEIIIIJJJ)))EEEIIII)))WWEEELLLAWKEEIIITTEEEIIIIJJJ)))EEEIIII)))WWEEELLLAWKEEIIITTEEEIIIIJJJ)))EEEIIII)))WWEEELLLAWKEEIIITTEEEIIIIJJJ)))EEEIIII)))WWEEELLLAWKEEIIITTEEEIIIIJJJ)))EEEIIII)))WWEEELLLAWKEEIIITTEEEIIIIJJJ)))EEEIIII)))WWEEELLLAWKEEIIITTEEEIIIIJJJ)))EEEIIII)))WWEEELLLAWKEEIIITTEEEIIIIJJJ)))EEEIIII)))WWEEELLL</div></div>
<div class="a" style="left:20px;top:797px;width:529px;height:32px;background:#f7faff"></div>
<div class="a" style="left:28px;top:828px;width:513px;height:1px;background:#e3e3e3"></div>
<div class="a t" style="left:36.00px;top:803.00px;font-size:13px;line-height:13px;color:#000;">N. 21 del 2024-12-22 |</div>
<div class="a" style="left:170px;top:799.00px;width:126px;height:21px;overflow:hidden;-webkit-mask-image:linear-gradient(to right,#000 55%,transparent)"><div class="a t" style="left:0;top:4px;font-size:13px;line-height:13px;font-weight:bold;color:#5e5e5e;letter-spacing:0px;text-shadow:1.5px 0 0 rgba(90,90,90,.35),3px 0 0 rgba(110,110,110,.18);filter:url(#hb0)">AWKEEIIITTEEEIIIIJJJ)))EEEIIII)))WWEEELLLAWKEEIIITTEEEIIIIJJJ)))EEEIIII)))WWEEELLLAWKEEIIITTEEEIIIIJJJ)))EEEIIII)))WWEEELLLAWKEEIIITTEEEIIIIJJJ)))EEEIIII)))WWEEELLLAWKEEIIITTEEEIIIIJJJ)))EEEIIII)))WWEEELLLAWKEEIIITTEEEIIIIJJJ)))EEEIIII)))WWEEELLLAWKEEIIITTEEEIIIIJJJ)))EEEIIII)))WWEEELLLAWKEEIIITTEEEIIIIJJJ)))EEEIIII)))WWEEELLLAWKEEIIITTEEEIIIIJJJ)))EEEIIII)))WWEEELLLAWKEEIIITTEEEIIIIJJJ)))EEEIIII)))WWEEELLLAWKEEIIITTEEEIIIIJJJ)))EEEIIII)))WWEEELLLAWKEEIIITTEEEIIIIJJJ)))EEEIIII)))WWEEELLLAWKEEIIITTEEEIIIIJJJ)))EEEIIII)))WWEEELLLAWKEEIIITTEEEIIIIJJJ)))EEEIIII)))WWEEELLLAWKEEIIITTEEEIIIIJJJ)))EEEIIII)))WWEEELLLAWKEEIIITTEEEIIIIJJJ)))EEEIIII)))WWEEELLLAWKEEIIITTEEEIIIIJJJ)))EEEIIII)))WWEEELLLAWKEEIIITTEEEIIIIJJJ)))EEEIIII)))WWEEELLLAWKEEIIITTEEEIIIIJJJ)))EEEIIII)))WWEEELLLAWKEEIIITTEEEIIIIJJJ)))EEEIIII)))WWEEELLL</div></div>
<div class="a" style="left:28px;top:860px;width:513px;height:1px;background:#e3e3e3"></div>
<div class="a t" style="left:36.00px;top:835.00px;font-size:13px;line-height:13px;color:#000;">N. 22 del 2024-12-22 |</div>
<div class="a" style="left:170px;top:831.00px;width:164px;height:21px;overflow:hidden;-webkit-mask-image:linear-gradient(to right,#000 55%,transparent)"><div class="a t" style="left:0;top:4px;font-size:13px;line-height:13px;font-weight:bold;color:#5e5e5e;letter-spacing:0px;text-shadow:1.5px 0 0 rgba(90,90,90,.35),3px 0 0 rgba(110,110,110,.18);filter:url(#hb0)">AWKEEIIITTEEEIIIIJJJ)))EEEIIII)))WWEEELLLAWKEEIIITTEEEIIIIJJJ)))EEEIIII)))WWEEELLLAWKEEIIITTEEEIIIIJJJ)))EEEIIII)))WWEEELLLAWKEEIIITTEEEIIIIJJJ)))EEEIIII)))WWEEELLLAWKEEIIITTEEEIIIIJJJ)))EEEIIII)))WWEEELLLAWKEEIIITTEEEIIIIJJJ)))EEEIIII)))WWEEELLLAWKEEIIITTEEEIIIIJJJ)))EEEIIII)))WWEEELLLAWKEEIIITTEEEIIIIJJJ)))EEEIIII)))WWEEELLLAWKEEIIITTEEEIIIIJJJ)))EEEIIII)))WWEEELLLAWKEEIIITTEEEIIIIJJJ)))EEEIIII)))WWEEELLLAWKEEIIITTEEEIIIIJJJ)))EEEIIII)))WWEEELLLAWKEEIIITTEEEIIIIJJJ)))EEEIIII)))WWEEELLLAWKEEIIITTEEEIIIIJJJ)))EEEIIII)))WWEEELLLAWKEEIIITTEEEIIIIJJJ)))EEEIIII)))WWEEELLLAWKEEIIITTEEEIIIIJJJ)))EEEIIII)))WWEEELLLAWKEEIIITTEEEIIIIJJJ)))EEEIIII)))WWEEELLLAWKEEIIITTEEEIIIIJJJ)))EEEIIII)))WWEEELLLAWKEEIIITTEEEIIIIJJJ)))EEEIIII)))WWEEELLLAWKEEIIITTEEEIIIIJJJ)))EEEIIII)))WWEEELLLAWKEEIIITTEEEIIIIJJJ)))EEEIIII)))WWEEELLL</div></div>
<div class="a" style="left:20px;top:861px;width:529px;height:32px;background:#f7faff"></div>
<div class="a" style="left:28px;top:892px;width:513px;height:1px;background:#e3e3e3"></div>
<div class="a t" style="left:36.00px;top:867.00px;font-size:13px;line-height:13px;color:#000;">N. 23 del 2024-12-22 |</div>
<div class="a" style="left:170px;top:863.00px;width:117px;height:21px;overflow:hidden;-webkit-mask-image:linear-gradient(to right,#000 55%,transparent)"><div class="a t" style="left:0;top:4px;font-size:13px;line-height:13px;font-weight:bold;color:#5e5e5e;letter-spacing:0px;text-shadow:1.5px 0 0 rgba(90,90,90,.35),3px 0 0 rgba(110,110,110,.18);filter:url(#hb0)">AWKEEIIITTEEEIIIIJJJ)))EEEIIII)))WWEEELLLAWKEEIIITTEEEIIIIJJJ)))EEEIIII)))WWEEELLLAWKEEIIITTEEEIIIIJJJ)))EEEIIII)))WWEEELLLAWKEEIIITTEEEIIIIJJJ)))EEEIIII)))WWEEELLLAWKEEIIITTEEEIIIIJJJ)))EEEIIII)))WWEEELLLAWKEEIIITTEEEIIIIJJJ)))EEEIIII)))WWEEELLLAWKEEIIITTEEEIIIIJJJ)))EEEIIII)))WWEEELLLAWKEEIIITTEEEIIIIJJJ)))EEEIIII)))WWEEELLLAWKEEIIITTEEEIIIIJJJ)))EEEIIII)))WWEEELLLAWKEEIIITTEEEIIIIJJJ)))EEEIIII)))WWEEELLLAWKEEIIITTEEEIIIIJJJ)))EEEIIII)))WWEEELLLAWKEEIIITTEEEIIIIJJJ)))EEEIIII)))WWEEELLLAWKEEIIITTEEEIIIIJJJ)))EEEIIII)))WWEEELLLAWKEEIIITTEEEIIIIJJJ)))EEEIIII)))WWEEELLLAWKEEIIITTEEEIIIIJJJ)))EEEIIII)))WWEEELLLAWKEEIIITTEEEIIIIJJJ)))EEEIIII)))WWEEELLLAWKEEIIITTEEEIIIIJJJ)))EEEIIII)))WWEEELLLAWKEEIIITTEEEIIIIJJJ)))EEEIIII)))WWEEELLLAWKEEIIITTEEEIIIIJJJ)))EEEIIII)))WWEEELLLAWKEEIIITTEEEIIIIJJJ)))EEEIIII)))WWEEELLL</div></div>
<div class="a" style="left:28px;top:924px;width:513px;height:1px;background:#e3e3e3"></div>
<div class="a t" style="left:36.00px;top:899.00px;font-size:13px;line-height:13px;color:#000;">N. 24 del 2024-12-22 |</div>
<div class="a" style="left:170px;top:895.00px;width:128px;height:21px;overflow:hidden;-webkit-mask-image:linear-gradient(to right,#000 55%,transparent)"><div class="a t" style="left:0;top:4px;font-size:13px;line-height:13px;font-weight:bold;color:#5e5e5e;letter-spacing:0px;text-shadow:1.5px 0 0 rgba(90,90,90,.35),3px 0 0 rgba(110,110,110,.18);filter:url(#hb0)">AWKEEIIITTEEEIIIIJJJ)))EEEIIII)))WWEEELLLAWKEEIIITTEEEIIIIJJJ)))EEEIIII)))WWEEELLLAWKEEIIITTEEEIIIIJJJ)))EEEIIII)))WWEEELLLAWKEEIIITTEEEIIIIJJJ)))EEEIIII)))WWEEELLLAWKEEIIITTEEEIIIIJJJ)))EEEIIII)))WWEEELLLAWKEEIIITTEEEIIIIJJJ)))EEEIIII)))WWEEELLLAWKEEIIITTEEEIIIIJJJ)))EEEIIII)))WWEEELLLAWKEEIIITTEEEIIIIJJJ)))EEEIIII)))WWEEELLLAWKEEIIITTEEEIIIIJJJ)))EEEIIII)))WWEEELLLAWKEEIIITTEEEIIIIJJJ)))EEEIIII)))WWEEELLLAWKEEIIITTEEEIIIIJJJ)))EEEIIII)))WWEEELLLAWKEEIIITTEEEIIIIJJJ)))EEEIIII)))WWEEELLLAWKEEIIITTEEEIIIIJJJ)))EEEIIII)))WWEEELLLAWKEEIIITTEEEIIIIJJJ)))EEEIIII)))WWEEELLLAWKEEIIITTEEEIIIIJJJ)))EEEIIII)))WWEEELLLAWKEEIIITTEEEIIIIJJJ)))EEEIIII)))WWEEELLLAWKEEIIITTEEEIIIIJJJ)))EEEIIII)))WWEEELLLAWKEEIIITTEEEIIIIJJJ)))EEEIIII)))WWEEELLLAWKEEIIITTEEEIIIIJJJ)))EEEIIII)))WWEEELLLAWKEEIIITTEEEIIIIJJJ)))EEEIIII)))WWEEELLL</div></div>
<div class="a" style="left:20px;top:925px;width:529px;height:32px;background:#f7faff"></div>
<div class="a" style="left:28px;top:956px;width:513px;height:1px;background:#e3e3e3"></div>
<div class="a t" style="left:36.00px;top:931.00px;font-size:13px;line-height:13px;color:#000;">N. 25 del 2024-12-22 |</div>
<div class="a" style="left:170px;top:927.00px;width:120px;height:21px;overflow:hidden;-webkit-mask-image:linear-gradient(to right,#000 55%,transparent)"><div class="a t" style="left:0;top:4px;font-size:13px;line-height:13px;font-weight:bold;color:#5e5e5e;letter-spacing:0px;text-shadow:1.5px 0 0 rgba(90,90,90,.35),3px 0 0 rgba(110,110,110,.18);filter:url(#hb0)">AWKEEIIITTEEEIIIIJJJ)))EEEIIII)))WWEEELLLAWKEEIIITTEEEIIIIJJJ)))EEEIIII)))WWEEELLLAWKEEIIITTEEEIIIIJJJ)))EEEIIII)))WWEEELLLAWKEEIIITTEEEIIIIJJJ)))EEEIIII)))WWEEELLLAWKEEIIITTEEEIIIIJJJ)))EEEIIII)))WWEEELLLAWKEEIIITTEEEIIIIJJJ)))EEEIIII)))WWEEELLLAWKEEIIITTEEEIIIIJJJ)))EEEIIII)))WWEEELLLAWKEEIIITTEEEIIIIJJJ)))EEEIIII)))WWEEELLLAWKEEIIITTEEEIIIIJJJ)))EEEIIII)))WWEEELLLAWKEEIIITTEEEIIIIJJJ)))EEEIIII)))WWEEELLLAWKEEIIITTEEEIIIIJJJ)))EEEIIII)))WWEEELLLAWKEEIIITTEEEIIIIJJJ)))EEEIIII)))WWEEELLLAWKEEIIITTEEEIIIIJJJ)))EEEIIII)))WWEEELLLAWKEEIIITTEEEIIIIJJJ)))EEEIIII)))WWEEELLLAWKEEIIITTEEEIIIIJJJ)))EEEIIII)))WWEEELLLAWKEEIIITTEEEIIIIJJJ)))EEEIIII)))WWEEELLLAWKEEIIITTEEEIIIIJJJ)))EEEIIII)))WWEEELLLAWKEEIIITTEEEIIIIJJJ)))EEEIIII)))WWEEELLLAWKEEIIITTEEEIIIIJJJ)))EEEIIII)))WWEEELLLAWKEEIIITTEEEIIIIJJJ)))EEEIIII)))WWEEELLL</div></div>
<div class="a" style="left:28px;top:988px;width:513px;height:1px;background:#e3e3e3"></div>
<div class="a t" style="left:36.00px;top:963.00px;font-size:13px;line-height:13px;color:#000;">N. 26 del 2024-12-22 |</div>
<div class="a" style="left:170px;top:959.00px;width:120px;height:21px;overflow:hidden;-webkit-mask-image:linear-gradient(to right,#000 55%,transparent)"><div class="a t" style="left:0;top:4px;font-size:13px;line-height:13px;font-weight:bold;color:#5e5e5e;letter-spacing:0px;text-shadow:1.5px 0 0 rgba(90,90,90,.35),3px 0 0 rgba(110,110,110,.18);filter:url(#hb0)">AWKEEIIITTEEEIIIIJJJ)))EEEIIII)))WWEEELLLAWKEEIIITTEEEIIIIJJJ)))EEEIIII)))WWEEELLLAWKEEIIITTEEEIIIIJJJ)))EEEIIII)))WWEEELLLAWKEEIIITTEEEIIIIJJJ)))EEEIIII)))WWEEELLLAWKEEIIITTEEEIIIIJJJ)))EEEIIII)))WWEEELLLAWKEEIIITTEEEIIIIJJJ)))EEEIIII)))WWEEELLLAWKEEIIITTEEEIIIIJJJ)))EEEIIII)))WWEEELLLAWKEEIIITTEEEIIIIJJJ)))EEEIIII)))WWEEELLLAWKEEIIITTEEEIIIIJJJ)))EEEIIII)))WWEEELLLAWKEEIIITTEEEIIIIJJJ)))EEEIIII)))WWEEELLLAWKEEIIITTEEEIIIIJJJ)))EEEIIII)))WWEEELLLAWKEEIIITTEEEIIIIJJJ)))EEEIIII)))WWEEELLLAWKEEIIITTEEEIIIIJJJ)))EEEIIII)))WWEEELLLAWKEEIIITTEEEIIIIJJJ)))EEEIIII)))WWEEELLLAWKEEIIITTEEEIIIIJJJ)))EEEIIII)))WWEEELLLAWKEEIIITTEEEIIIIJJJ)))EEEIIII)))WWEEELLLAWKEEIIITTEEEIIIIJJJ)))EEEIIII)))WWEEELLLAWKEEIIITTEEEIIIIJJJ)))EEEIIII)))WWEEELLLAWKEEIIITTEEEIIIIJJJ)))EEEIIII)))WWEEELLLAWKEEIIITTEEEIIIIJJJ)))EEEIIII)))WWEEELLL</div></div>
<div class="a" style="left:20px;top:989px;width:529px;height:32px;background:#f7faff"></div>
<div class="a" style="left:28px;top:1020px;width:513px;height:1px;background:#e3e3e3"></div>
<div class="a t" style="left:36.00px;top:995.00px;font-size:13px;line-height:13px;color:#000;">N. 27 del 2024-12-22 |</div>
<div class="a" style="left:170px;top:991.00px;width:113px;height:21px;overflow:hidden;-webkit-mask-image:linear-gradient(to right,#000 55%,transparent)"><div class="a t" style="left:0;top:4px;font-size:13px;line-height:13px;font-weight:bold;color:#5e5e5e;letter-spacing:0px;text-shadow:1.5px 0 0 rgba(90,90,90,.35),3px 0 0 rgba(110,110,110,.18);filter:url(#hb0)">AWKEEIIITTEEEIIIIJJJ)))EEEIIII)))WWEEELLLAWKEEIIITTEEEIIIIJJJ)))EEEIIII)))WWEEELLLAWKEEIIITTEEEIIIIJJJ)))EEEIIII)))WWEEELLLAWKEEIIITTEEEIIIIJJJ)))EEEIIII)))WWEEELLLAWKEEIIITTEEEIIIIJJJ)))EEEIIII)))WWEEELLLAWKEEIIITTEEEIIIIJJJ)))EEEIIII)))WWEEELLLAWKEEIIITTEEEIIIIJJJ)))EEEIIII)))WWEEELLLAWKEEIIITTEEEIIIIJJJ)))EEEIIII)))WWEEELLLAWKEEIIITTEEEIIIIJJJ)))EEEIIII)))WWEEELLLAWKEEIIITTEEEIIIIJJJ)))EEEIIII)))WWEEELLLAWKEEIIITTEEEIIIIJJJ)))EEEIIII)))WWEEELLLAWKEEIIITTEEEIIIIJJJ)))EEEIIII)))WWEEELLLAWKEEIIITTEEEIIIIJJJ)))EEEIIII)))WWEEELLLAWKEEIIITTEEEIIIIJJJ)))EEEIIII)))WWEEELLLAWKEEIIITTEEEIIIIJJJ)))EEEIIII)))WWEEELLLAWKEEIIITTEEEIIIIJJJ)))EEEIIII)))WWEEELLLAWKEEIIITTEEEIIIIJJJ)))EEEIIII)))WWEEELLLAWKEEIIITTEEEIIIIJJJ)))EEEIIII)))WWEEELLLAWKEEIIITTEEEIIIIJJJ)))EEEIIII)))WWEEELLLAWKEEIIITTEEEIIIIJJJ)))EEEIIII)))WWEEELLL</div></div>
<div class="a" style="left:28px;top:1052px;width:513px;height:1px;background:#e3e3e3"></div>
<div class="a t" style="left:36.00px;top:1027.00px;font-size:13px;line-height:13px;color:#000;">N. 28 del 2024-12-22 |</div>
<div class="a" style="left:170px;top:1023.00px;width:120px;height:21px;overflow:hidden;-webkit-mask-image:linear-gradient(to right,#000 55%,transparent)"><div class="a t" style="left:0;top:4px;font-size:13px;line-height:13px;font-weight:bold;color:#5e5e5e;letter-spacing:0px;text-shadow:1.5px 0 0 rgba(90,90,90,.35),3px 0 0 rgba(110,110,110,.18);filter:url(#hb0)">AWKEEIIITTEEEIIIIJJJ)))EEEIIII)))WWEEELLLAWKEEIIITTEEEIIIIJJJ)))EEEIIII)))WWEEELLLAWKEEIIITTEEEIIIIJJJ)))EEEIIII)))WWEEELLLAWKEEIIITTEEEIIIIJJJ)))EEEIIII)))WWEEELLLAWKEEIIITTEEEIIIIJJJ)))EEEIIII)))WWEEELLLAWKEEIIITTEEEIIIIJJJ)))EEEIIII)))WWEEELLLAWKEEIIITTEEEIIIIJJJ)))EEEIIII)))WWEEELLLAWKEEIIITTEEEIIIIJJJ)))EEEIIII)))WWEEELLLAWKEEIIITTEEEIIIIJJJ)))EEEIIII)))WWEEELLLAWKEEIIITTEEEIIIIJJJ)))EEEIIII)))WWEEELLLAWKEEIIITTEEEIIIIJJJ)))EEEIIII)))WWEEELLLAWKEEIIITTEEEIIIIJJJ)))EEEIIII)))WWEEELLLAWKEEIIITTEEEIIIIJJJ)))EEEIIII)))WWEEELLLAWKEEIIITTEEEIIIIJJJ)))EEEIIII)))WWEEELLLAWKEEIIITTEEEIIIIJJJ)))EEEIIII)))WWEEELLLAWKEEIIITTEEEIIIIJJJ)))EEEIIII)))WWEEELLLAWKEEIIITTEEEIIIIJJJ)))EEEIIII)))WWEEELLLAWKEEIIITTEEEIIIIJJJ)))EEEIIII)))WWEEELLLAWKEEIIITTEEEIIIIJJJ)))EEEIIII)))WWEEELLLAWKEEIIITTEEEIIIIJJJ)))EEEIIII)))WWEEELLL</div></div>
<div class="a" style="left:20px;top:1053px;width:529px;height:32px;background:#f7faff"></div>
<div class="a" style="left:28px;top:1084px;width:513px;height:1px;background:#e3e3e3"></div>
<div class="a t" style="left:36.00px;top:1059.00px;font-size:13px;line-height:13px;color:#000;">N. 29 del 2024-12-22 |</div>
<div class="a" style="left:170px;top:1055.00px;width:113px;height:21px;overflow:hidden;-webkit-mask-image:linear-gradient(to right,#000 55%,transparent)"><div class="a t" style="left:0;top:4px;font-size:13px;line-height:13px;font-weight:bold;color:#5e5e5e;letter-spacing:0px;text-shadow:1.5px 0 0 rgba(90,90,90,.35),3px 0 0 rgba(110,110,110,.18);filter:url(#hb0)">AWKEEIIITTEEEIIIIJJJ)))EEEIIII)))WWEEELLLAWKEEIIITTEEEIIIIJJJ)))EEEIIII)))WWEEELLLAWKEEIIITTEEEIIIIJJJ)))EEEIIII)))WWEEELLLAWKEEIIITTEEEIIIIJJJ)))EEEIIII)))WWEEELLLAWKEEIIITTEEEIIIIJJJ)))EEEIIII)))WWEEELLLAWKEEIIITTEEEIIIIJJJ)))EEEIIII)))WWEEELLLAWKEEIIITTEEEIIIIJJJ)))EEEIIII)))WWEEELLLAWKEEIIITTEEEIIIIJJJ)))EEEIIII)))WWEEELLLAWKEEIIITTEEEIIIIJJJ)))EEEIIII)))WWEEELLLAWKEEIIITTEEEIIIIJJJ)))EEEIIII)))WWEEELLLAWKEEIIITTEEEIIIIJJJ)))EEEIIII)))WWEEELLLAWKEEIIITTEEEIIIIJJJ)))EEEIIII)))WWEEELLLAWKEEIIITTEEEIIIIJJJ)))EEEIIII)))WWEEELLLAWKEEIIITTEEEIIIIJJJ)))EEEIIII)))WWEEELLLAWKEEIIITTEEEIIIIJJJ)))EEEIIII)))WWEEELLLAWKEEIIITTEEEIIIIJJJ)))EEEIIII)))WWEEELLLAWKEEIIITTEEEIIIIJJJ)))EEEIIII)))WWEEELLLAWKEEIIITTEEEIIIIJJJ)))EEEIIII)))WWEEELLLAWKEEIIITTEEEIIIIJJJ)))EEEIIII)))WWEEELLLAWKEEIIITTEEEIIIIJJJ)))EEEIIII)))WWEEELLL</div></div>
<div class="a" style="left:20px;top:125px;width:529px;height:32px;background:linear-gradient(to right,#0070d4,#0066c0 45%,#005aa5)"></div>
<div class="a" style="left:29px;top:139px;width:3px;height:5px;background:#fff"></div>
<div class="a" style="left:31px;top:140px;width:4px;height:3px;background:#fff"></div>
<div class="a" style="left:35px;top:141px;width:4px;height:1.5px;background:#fff"></div>
<div class="a" style="left:44px;top:134px;width:150px;height:14px;background:linear-gradient(to right,rgba(255,255,255,.12),rgba(255,255,255,.08) 80%,rgba(255,255,255,0));filter:blur(1.5px)"></div>
<div class="a" style="left:44px;top:131.50px;width:152px;height:21px;overflow:hidden;-webkit-mask-image:linear-gradient(to right,#000 75%,transparent)"><div class="a t" style="left:0;top:4px;font-size:13px;line-height:13px;font-weight:bold;color:rgba(255,255,255,.85);letter-spacing:0px;text-shadow:1.5px 0 0 rgba(90,90,90,.35),3px 0 0 rgba(110,110,110,.18);filter:url(#hb0)">FEIIIIIEEEEEEEIIIIIIIIJJJJJ)))FEIIIIIEEEEEEEIIIIIIIIJJJJJ)))FEIIIIIEEEEEEEIIIIIIIIJJJJJ)))FEIIIIIEEEEEEEIIIIIIIIJJJJJ)))FEIIIIIEEEEEEEIIIIIIIIJJJJJ)))FEIIIIIEEEEEEEIIIIIIIIJJJJJ)))FEIIIIIEEEEEEEIIIIIIIIJJJJJ)))FEIIIIIEEEEEEEIIIIIIIIJJJJJ)))FEIIIIIEEEEEEEIIIIIIIIJJJJJ)))FEIIIIIEEEEEEEIIIIIIIIJJJJJ)))FEIIIIIEEEEEEEIIIIIIIIJJJJJ)))FEIIIIIEEEEEEEIIIIIIIIJJJJJ)))FEIIIIIEEEEEEEIIIIIIIIJJJJJ)))FEIIIIIEEEEEEEIIIIIIIIJJJJJ)))FEIIIIIEEEEEEEIIIIIIIIJJJJJ)))FEIIIIIEEEEEEEIIIIIIIIJJJJJ)))FEIIIIIEEEEEEEIIIIIIIIJJJJJ)))FEIIIIIEEEEEEEIIIIIIIIJJJJJ)))FEIIIIIEEEEEEEIIIIIIIIJJJJJ)))FEIIIIIEEEEEEEIIIIIIIIJJJJJ)))</div></div>
<div class="a" style="left:588px;top:123px;width:1310px;height:946px;background:#fff"></div>
<div class="a" style="left:603px;top:131px;width:800px;height:258px;border:2px solid #000"></div>
<div class="a" style="left:607px;top:135px;width:395px;height:250px;border:1px solid #000"></div>
<div class="a" style="left:1004px;top:135px;width:395px;height:250px;border:1px solid #000"></div>
<div class="a t" style="left:612.00px;top:143.00px;font-size:13px;line-height:13px;color:#000;font-weight:bold;letter-spacing:0.227px;">Cedente/prestatore (fornitore)</div>
<div class="a t" style="left:622.00px;top:166.00px;font-size:13px;line-height:13px;color:#000;letter-spacing:0.029px;">Identificativo fiscale ai fini IVA: IT03861000135</div>
<div class="a t" style="left:622.00px;top:184.00px;font-size:13px;line-height:13px;color:#000;letter-spacing:-0.103px;">Codice fiscale:</div>
<div class="a" style="left:708px;top:180.00px;width:152px;height:21px;overflow:hidden;-webkit-mask-image:linear-gradient(to right,#000 70%,transparent)"><div class="a t" style="left:0;top:4px;font-size:13px;line-height:13px;font-weight:normal;color:#6a6a6a;letter-spacing:-2.2px;text-shadow:1.5px 0 0 rgba(90,90,90,.35),3px 0 0 rgba(110,110,110,.18);filter:url(#hb0)">BBRRHHBBEEDDDDEEEE0000IIII11117777RRBBBBRRHHBBEEDDDDEEEE0000IIII11117777RRBBBBRRHHBBEEDDDDEEEE0000IIII11117777RRBBBBRRHHBBEEDDDDEEEE0000IIII11117777RRBBBBRRHHBBEEDDDDEEEE0000IIII11117777RRBBBBRRHHBBEEDDDDEEEE0000IIII11117777RRBBBBRRHHBBEEDDDDEEEE0000IIII11117777RRBBBBRRHHBBEEDDDDEEEE0000IIII11117777RRBBBBRRHHBBEEDDDDEEEE0000IIII11117777RRBBBBRRHHBBEEDDDDEEEE0000IIII11117777RRBBBBRRHHBBEEDDDDEEEE0000IIII11117777RRBBBBRRHHBBEEDDDDEEEE0000IIII11117777RRBBBBRRHHBBEEDDDDEEEE0000IIII11117777RRBBBBRRHHBBEEDDDDEEEE0000IIII11117777RRBBBBRRHHBBEEDDDDEEEE0000IIII11117777RRBBBBRRHHBBEEDDDDEEEE0000IIII11117777RRBBBBRRHHBBEEDDDDEEEE0000IIII11117777RRBBBBRRHHBBEEDDDDEEEE0000IIII11117777RRBBBBRRHHBBEEDDDDEEEE0000IIII11117777RRBBBBRRHHBBEEDDDDEEEE0000IIII11117777RRBB</div></div>
<div class="a t" style="left:622.00px;top:202.00px;font-size:13px;line-height:13px;color:#000;letter-spacing:0.458px;">Cognome nome</div>
<div class="a" style="left:721px;top:198.00px;width:145px;height:21px;overflow:hidden;-webkit-mask-image:linear-gradient(to right,#000 70%,transparent)"><div class="a t" style="left:0;top:4px;font-size:13px;line-height:13px;font-weight:normal;color:#6a6a6a;letter-spacing:-2.2px;text-shadow:1.5px 0 0 rgba(90,90,90,.35),3px 0 0 rgba(110,110,110,.18);filter:url(#hb0)">BBRRHHBBEEDDDDEEEE0000IIII11117777RRBBBBRRHHBBEEDDDDEEEE0000IIII11117777RRBBBBRRHHBBEEDDDDEEEE0000IIII11117777RRBBBBRRHHBBEEDDDDEEEE0000IIII11117777RRBBBBRRHHBBEEDDDDEEEE0000IIII11117777RRBBBBRRHHBBEEDDDDEEEE0000IIII11117777RRBBBBRRHHBBEEDDDDEEEE0000IIII11117777RRBBBBRRHHBBEEDDDDEEEE0000IIII11117777RRBBBBRRHHBBEEDDDDEEEE0000IIII11117777RRBBBBRRHHBBEEDDDDEEEE0000IIII11117777RRBBBBRRHHBBEEDDDDEEEE0000IIII11117777RRBBBBRRHHBBEEDDDDEEEE0000IIII11117777RRBBBBRRHHBBEEDDDDEEEE0000IIII11117777RRBBBBRRHHBBEEDDDDEEEE0000IIII11117777RRBBBBRRHHBBEEDDDDEEEE0000IIII11117777RRBBBBRRHHBBEEDDDDEEEE0000IIII11117777RRBBBBRRHHBBEEDDDDEEEE0000IIII11117777RRBBBBRRHHBBEEDDDDEEEE0000IIII11117777RRBBBBRRHHBBEEDDDDEEEE0000IIII11117777RRBBBBRRHHBBEEDDDDEEEE0000IIII11117777RRBB</div></div>
<div class="a t" style="left:622.00px;top:219.00px;font-size:13px;line-height:13px;color:#000;letter-spacing:-0.082px;">Regime fiscale: RF01 ordinario</div>
<div class="a t" style="left:622.00px;top:237.00px;font-size:13px;line-height:13px;color:#000;letter-spacing:0.097px;">Indirizzo:</div>
<div class="a" style="left:675px;top:233.00px;width:188px;height:21px;overflow:hidden;-webkit-mask-image:linear-gradient(to right,#000 70%,transparent)"><div class="a t" style="left:0;top:4px;font-size:13px;line-height:13px;font-weight:normal;color:#6a6a6a;letter-spacing:-2.2px;text-shadow:1.5px 0 0 rgba(90,90,90,.35),3px 0 0 rgba(110,110,110,.18);filter:url(#hb0)">BBRRHHBBEEDDDDEEEE0000IIII11117777RRBBBBRRHHBBEEDDDDEEEE0000IIII11117777RRBBBBRRHHBBEEDDDDEEEE0000IIII11117777RRBBBBRRHHBBEEDDDDEEEE0000IIII11117777RRBBBBRRHHBBEEDDDDEEEE0000IIII11117777RRBBBBRRHHBBEEDDDDEEEE0000IIII11117777RRBBBBRRHHBBEEDDDDEEEE0000IIII11117777RRBBBBRRHHBBEEDDDDEEEE0000IIII11117777RRBBBBRRHHBBEEDDDDEEEE0000IIII11117777RRBBBBRRHHBBEEDDDDEEEE0000IIII11117777RRBBBBRRHHBBEEDDDDEEEE0000IIII11117777RRBBBBRRHHBBEEDDDDEEEE0000IIII11117777RRBBBBRRHHBBEEDDDDEEEE0000IIII11117777RRBBBBRRHHBBEEDDDDEEEE0000IIII11117777RRBBBBRRHHBBEEDDDDEEEE0000IIII11117777RRBBBBRRHHBBEEDDDDEEEE0000IIII11117777RRBBBBRRHHBBEEDDDDEEEE0000IIII11117777RRBBBBRRHHBBEEDDDDEEEE0000IIII11117777RRBBBBRRHHBBEEDDDDEEEE0000IIII11117777RRBBBBRRHHBBEEDDDDEEEE0000IIII11117777RRBB</div></div>
<div class="a t" style="left:622.00px;top:254.00px;font-size:13px;line-height:13px;color:#000;letter-spacing:-0.107px;">Comune:</div>
<div class="a" style="left:675px;top:250.00px;width:190px;height:21px;overflow:hidden;-webkit-mask-image:linear-gradient(to right,#000 80%,transparent)"><div class="a t" style="left:0;top:4px;font-size:13px;line-height:13px;font-weight:normal;color:#6a6a6a;letter-spacing:-2.2px;text-shadow:1.5px 0 0 rgba(90,90,90,.35),3px 0 0 rgba(110,110,110,.18);filter:url(#hb0)">BORGO VAL DI TARO Prov BORGO VAL DI TARO Prov BORGO VAL DI TARO Prov BORGO VAL DI TARO Prov BORGO VAL DI TARO Prov BORGO VAL DI TARO Prov BORGO VAL DI TARO Prov BORGO VAL DI TARO Prov BORGO VAL DI TARO Prov BORGO VAL DI TARO Prov BORGO VAL DI TARO Prov BORGO VAL DI TARO Prov BORGO VAL DI TARO Prov BORGO VAL DI TARO Prov BORGO VAL DI TARO Prov BORGO VAL DI TARO Prov BORGO VAL DI TARO Prov BORGO VAL DI TARO Prov BORGO VAL DI TARO Prov BORGO VAL DI TARO Prov </div></div>
<div class="a t" style="left:864.00px;top:254.00px;font-size:13px;line-height:13px;color:#aaa;filter:url(#hb0)">PR</div>
<div class="a t" style="left:622.00px;top:272.00px;font-size:13px;line-height:13px;color:#000;letter-spacing:-0.151px;">Cap: 43043 Nazione: IT</div>
<div class="a t" style="left:612.00px;top:308.00px;font-size:13px;line-height:13px;color:#000;font-weight:bold;letter-spacing:0.227px;">Terzo Intermediario</div>
<div class="a t" style="left:622.00px;top:331.00px;font-size:13px;line-height:13px;color:#000;letter-spacing:0.174px;">Identificativo fiscale ai fini IVA:</div>
<div class="a" style="left:803px;top:327.00px;width:99px;height:21px;overflow:hidden;-webkit-mask-image:linear-gradient(to right,#000 75%,transparent)"><div class="a t" style="left:0;top:4px;font-size:13px;line-height:13px;font-weight:normal;color:#6a6a6a;letter-spacing:-2.2px;text-shadow:1.5px 0 0 rgba(90,90,90,.35),3px 0 0 rgba(110,110,110,.18);filter:url(#hb0)">BBRRHHBBEEDDDDEEEE0000IIII11117777RRBBBBRRHHBBEEDDDDEEEE0000IIII11117777RRBBBBRRHHBBEEDDDDEEEE0000IIII11117777RRBBBBRRHHBBEEDDDDEEEE0000IIII11117777RRBBBBRRHHBBEEDDDDEEEE0000IIII11117777RRBBBBRRHHBBEEDDDDEEEE0000IIII11117777RRBBBBRRHHBBEEDDDDEEEE0000IIII11117777RRBBBBRRHHBBEEDDDDEEEE0000IIII11117777RRBBBBRRHHBBEEDDDDEEEE0000IIII11117777RRBBBBRRHHBBEEDDDDEEEE0000IIII11117777RRBBBBRRHHBBEEDDDDEEEE0000IIII11117777RRBBBBRRHHBBEEDDDDEEEE0000IIII11117777RRBBBBRRHHBBEEDDDDEEEE0000IIII11117777RRBBBBRRHHBBEEDDDDEEEE0000IIII11117777RRBBBBRRHHBBEEDDDDEEEE0000IIII11117777RRBBBBRRHHBBEEDDDDEEEE0000IIII11117777RRBBBBRRHHBBEEDDDDEEEE0000IIII11117777RRBBBBRRHHBBEEDDDDEEEE0000IIII11117777RRBBBBRRHHBBEEDDDDEEEE0000IIII11117777RRBBBBRRHHBBEEDDDDEEEE0000IIII11117777RRBB</div></div>
<div class="a t" style="left:622.00px;top:348.00px;font-size:13px;line-height:13px;color:#000;letter-spacing:-0.103px;">Codice fiscale:</div>
<div class="a" style="left:704px;top:344.00px;width:125px;height:21px;overflow:hidden;-webkit-mask-image:linear-gradient(to right,#000 60%,transparent)"><div class="a t" style="left:0;top:4px;font-size:13px;line-height:13px;font-weight:normal;color:#6a6a6a;letter-spacing:-2.2px;text-shadow:1.5px 0 0 rgba(90,90,90,.35),3px 0 0 rgba(110,110,110,.18);filter:url(#hb0)">BBRRHHBBEEDDDDEEEE0000IIII11117777RRBBBBRRHHBBEEDDDDEEEE0000IIII11117777RRBBBBRRHHBBEEDDDDEEEE0000IIII11117777RRBBBBRRHHBBEEDDDDEEEE0000IIII11117777RRBBBBRRHHBBEEDDDDEEEE0000IIII11117777RRBBBBRRHHBBEEDDDDEEEE0000IIII11117777RRBBBBRRHHBBEEDDDDEEEE0000IIII11117777RRBBBBRRHHBBEEDDDDEEEE0000IIII11117777RRBBBBRRHHBBEEDDDDEEEE0000IIII11117777RRBBBBRRHHBBEEDDDDEEEE0000IIII11117777RRBBBBRRHHBBEEDDDDEEEE0000IIII11117777RRBBBBRRHHBBEEDDDDEEEE0000IIII11117777RRBBBBRRHHBBEEDDDDEEEE0000IIII11117777RRBBBBRRHHBBEEDDDDEEEE0000IIII11117777RRBBBBRRHHBBEEDDDDEEEE0000IIII11117777RRBBBBRRHHBBEEDDDDEEEE0000IIII11117777RRBBBBRRHHBBEEDDDDEEEE0000IIII11117777RRBBBBRRHHBBEEDDDDEEEE0000IIII11117777RRBBBBRRHHBBEEDDDDEEEE0000IIII11117777RRBBBBRRHHBBEEDDDDEEEE0000IIII11117777RRBB</div></div>
<div class="a t" style="left:622.00px;top:366.00px;font-size:13px;line-height:13px;color:#000;letter-spacing:0.146px;">Denominazione:</div>
<div class="a" style="left:718px;top:362.00px;width:177px;height:21px;overflow:hidden;-webkit-mask-image:linear-gradient(to right,#000 65%,transparent)"><div class="a t" style="left:0;top:4px;font-size:13px;line-height:13px;font-weight:normal;color:#6a6a6a;letter-spacing:-2.2px;text-shadow:1.5px 0 0 rgba(90,90,90,.35),3px 0 0 rgba(110,110,110,.18);filter:url(#hb0)">BBRRHHBBEEDDDDEEEE0000IIII11117777RRBBBBRRHHBBEEDDDDEEEE0000IIII11117777RRBBBBRRHHBBEEDDDDEEEE0000IIII11117777RRBBBBRRHHBBEEDDDDEEEE0000IIII11117777RRBBBBRRHHBBEEDDDDEEEE0000IIII11117777RRBBBBRRHHBBEEDDDDEEEE0000IIII11117777RRBBBBRRHHBBEEDDDDEEEE0000IIII11117777RRBBBBRRHHBBEEDDDDEEEE0000IIII11117777RRBBBBRRHHBBEEDDDDEEEE0000IIII11117777RRBBBBRRHHBBEEDDDDEEEE0000IIII11117777RRBBBBRRHHBBEEDDDDEEEE0000IIII11117777RRBBBBRRHHBBEEDDDDEEEE0000IIII11117777RRBBBBRRHHBBEEDDDDEEEE0000IIII11117777RRBBBBRRHHBBEEDDDDEEEE0000IIII11117777RRBBBBRRHHBBEEDDDDEEEE0000IIII11117777RRBBBBRRHHBBEEDDDDEEEE0000IIII11117777RRBBBBRRHHBBEEDDDDEEEE0000IIII11117777RRBBBBRRHHBBEEDDDDEEEE0000IIII11117777RRBBBBRRHHBBEEDDDDEEEE0000IIII11117777RRBBBBRRHHBBEEDDDDEEEE0000IIII11117777RRBB</div></div>
<div class="a t" style="left:1009.00px;top:143.00px;font-size:13px;line-height:13px;color:#000;font-weight:bold;letter-spacing:0.128px;">Cessionario/committente (cliente)</div>
<div class="a t" style="left:1019.00px;top:166.00px;font-size:13px;line-height:13px;color:#000;letter-spacing:0.058px;">Identificativo fiscale</div>
<div class="a t" style="left:1137.00px;top:166.00px;font-size:13px;line-height:13px;color:#4a4a4a;letter-spacing:0.075px;filter:url(#hb0)">ai fini IV</div>
<div class="a" style="left:1180px;top:162.00px;width:122px;height:21px;overflow:hidden;-webkit-mask-image:linear-gradient(to right,#000 65%,transparent)"><div class="a t" style="left:0;top:4px;font-size:13px;line-height:13px;font-weight:normal;color:#6a6a6a;letter-spacing:-2.2px;text-shadow:1.5px 0 0 rgba(90,90,90,.35),3px 0 0 rgba(110,110,110,.18);filter:url(#hb0)">BBRRHHBBEEDDDDEEEE0000IIII11117777RRBBBBRRHHBBEEDDDDEEEE0000IIII11117777RRBBBBRRHHBBEEDDDDEEEE0000IIII11117777RRBBBBRRHHBBEEDDDDEEEE0000IIII11117777RRBBBBRRHHBBEEDDDDEEEE0000IIII11117777RRBBBBRRHHBBEEDDDDEEEE0000IIII11117777RRBBBBRRHHBBEEDDDDEEEE0000IIII11117777RRBBBBRRHHBBEEDDDDEEEE0000IIII11117777RRBBBBRRHHBBEEDDDDEEEE0000IIII11117777RRBBBBRRHHBBEEDDDDEEEE0000IIII11117777RRBBBBRRHHBBEEDDDDEEEE0000IIII11117777RRBBBBRRHHBBEEDDDDEEEE0000IIII11117777RRBBBBRRHHBBEEDDDDEEEE0000IIII11117777RRBBBBRRHHBBEEDDDDEEEE0000IIII11117777RRBBBBRRHHBBEEDDDDEEEE0000IIII11117777RRBBBBRRHHBBEEDDDDEEEE0000IIII11117777RRBBBBRRHHBBEEDDDDEEEE0000IIII11117777RRBBBBRRHHBBEEDDDDEEEE0000IIII11117777RRBBBBRRHHBBEEDDDDEEEE0000IIII11117777RRBBBBRRHHBBEEDDDDEEEE0000IIII11117777RRBB</div></div>
<div class="a t" style="left:1019.00px;top:184.00px;font-size:13px;line-height:13px;color:#000;letter-spacing:-0.103px;">Codice fiscale:</div>
<div class="a" style="left:1106px;top:180.00px;width:156px;height:21px;overflow:hidden;-webkit-mask-image:linear-gradient(to right,#000 60%,transparent)"><div class="a t" style="left:0;top:4px;font-size:13px;line-height:13px;font-weight:normal;color:#6a6a6a;letter-spacing:-2.2px;text-shadow:1.5px 0 0 rgba(90,90,90,.35),3px 0 0 rgba(110,110,110,.18);filter:url(#hb0)">BBRRHHBBEEDDDDEEEE0000IIII11117777RRBBBBRRHHBBEEDDDDEEEE0000IIII11117777RRBBBBRRHHBBEEDDDDEEEE0000IIII11117777RRBBBBRRHHBBEEDDDDEEEE0000IIII11117777RRBBBBRRHHBBEEDDDDEEEE0000IIII11117777RRBBBBRRHHBBEEDDDDEEEE0000IIII11117777RRBBBBRRHHBBEEDDDDEEEE0000IIII11117777RRBBBBRRHHBBEEDDDDEEEE0000IIII11117777RRBBBBRRHHBBEEDDDDEEEE0000IIII11117777RRBBBBRRHHBBEEDDDDEEEE0000IIII11117777RRBBBBRRHHBBEEDDDDEEEE0000IIII11117777RRBBBBRRHHBBEEDDDDEEEE0000IIII11117777RRBBBBRRHHBBEEDDDDEEEE0000IIII11117777RRBBBBRRHHBBEEDDDDEEEE0000IIII11117777RRBBBBRRHHBBEEDDDDEEEE0000IIII11117777RRBBBBRRHHBBEEDDDDEEEE0000IIII11117777RRBBBBRRHHBBEEDDDDEEEE0000IIII11117777RRBBBBRRHHBBEEDDDDEEEE0000IIII11117777RRBBBBRRHHBBEEDDDDEEEE0000IIII11117777RRBBBBRRHHBBEEDDDDEEEE0000IIII11117777RRBB</div></div>
<div class="a t" style="left:1019.00px;top:202.00px;font-size:13px;line-height:13px;color:#000;letter-spacing:0.127px;">Denominazione</div>
<div class="a" style="left:1110px;top:198.00px;width:255px;height:21px;overflow:hidden;-webkit-mask-image:linear-gradient(to right,#000 85%,transparent)"><div class="a t" style="left:0;top:4px;font-size:13px;line-height:13px;font-weight:normal;color:#6a6a6a;letter-spacing:-2.2px;text-shadow:1.5px 0 0 rgba(90,90,90,.35),3px 0 0 rgba(110,110,110,.18);filter:url(#hb0)">BBRRHHBBEEDDDDEEEE0000IIII11117777RRBBBBRRHHBBEEDDDDEEEE0000IIII11117777RRBBBBRRHHBBEEDDDDEEEE0000IIII11117777RRBBBBRRHHBBEEDDDDEEEE0000IIII11117777RRBBBBRRHHBBEEDDDDEEEE0000IIII11117777RRBBBBRRHHBBEEDDDDEEEE0000IIII11117777RRBBBBRRHHBBEEDDDDEEEE0000IIII11117777RRBBBBRRHHBBEEDDDDEEEE0000IIII11117777RRBBBBRRHHBBEEDDDDEEEE0000IIII11117777RRBBBBRRHHBBEEDDDDEEEE0000IIII11117777RRBBBBRRHHBBEEDDDDEEEE0000IIII11117777RRBBBBRRHHBBEEDDDDEEEE0000IIII11117777RRBBBBRRHHBBEEDDDDEEEE0000IIII11117777RRBBBBRRHHBBEEDDDDEEEE0000IIII11117777RRBBBBRRHHBBEEDDDDEEEE0000IIII11117777RRBBBBRRHHBBEEDDDDEEEE0000IIII11117777RRBBBBRRHHBBEEDDDDEEEE0000IIII11117777RRBBBBRRHHBBEEDDDDEEEE0000IIII11117777RRBBBBRRHHBBEEDDDDEEEE0000IIII11117777RRBBBBRRHHBBEEDDDDEEEE0000IIII11117777RRBB</div></div>
<div class="a t" style="left:1019.00px;top:219.00px;font-size:13px;line-height:13px;color:#000;letter-spacing:-0.047px;">Indirizzo</div>
<div class="a" style="left:1068px;top:215.00px;width:225px;height:21px;overflow:hidden;-webkit-mask-image:linear-gradient(to right,#000 70%,transparent)"><div class="a t" style="left:0;top:4px;font-size:13px;line-height:13px;font-weight:normal;color:#6a6a6a;letter-spacing:-2.2px;text-shadow:1.5px 0 0 rgba(90,90,90,.35),3px 0 0 rgba(110,110,110,.18);filter:url(#hb0)">BBRRHHBBEEDDDDEEEE0000IIII11117777RRBBBBRRHHBBEEDDDDEEEE0000IIII11117777RRBBBBRRHHBBEEDDDDEEEE0000IIII11117777RRBBBBRRHHBBEEDDDDEEEE0000IIII11117777RRBBBBRRHHBBEEDDDDEEEE0000IIII11117777RRBBBBRRHHBBEEDDDDEEEE0000IIII11117777RRBBBBRRHHBBEEDDDDEEEE0000IIII11117777RRBBBBRRHHBBEEDDDDEEEE0000IIII11117777RRBBBBRRHHBBEEDDDDEEEE0000IIII11117777RRBBBBRRHHBBEEDDDDEEEE0000IIII11117777RRBBBBRRHHBBEEDDDDEEEE0000IIII11117777RRBBBBRRHHBBEEDDDDEEEE0000IIII11117777RRBBBBRRHHBBEEDDDDEEEE0000IIII11117777RRBBBBRRHHBBEEDDDDEEEE0000IIII11117777RRBBBBRRHHBBEEDDDDEEEE0000IIII11117777RRBBBBRRHHBBEEDDDDEEEE0000IIII11117777RRBBBBRRHHBBEEDDDDEEEE0000IIII11117777RRBBBBRRHHBBEEDDDDEEEE0000IIII11117777RRBBBBRRHHBBEEDDDDEEEE0000IIII11117777RRBBBBRRHHBBEEDDDDEEEE0000IIII11117777RRBB</div></div>
<div class="a t" style="left:1019.00px;top:237.00px;font-size:13px;line-height:13px;color:#000;letter-spacing:-0.107px;">Comune:</div>
<div class="a" style="left:1072px;top:233.00px;width:157px;height:21px;overflow:hidden;-webkit-mask-image:linear-gradient(to right,#000 65%,transparent)"><div class="a t" style="left:0;top:4px;font-size:13px;line-height:13px;font-weight:normal;color:#6a6a6a;letter-spacing:-2.2px;text-shadow:1.5px 0 0 rgba(90,90,90,.35),3px 0 0 rgba(110,110,110,.18);filter:url(#hb0)">BBRRHHBBEEDDDDEEEE0000IIII11117777RRBBBBRRHHBBEEDDDDEEEE0000IIII11117777RRBBBBRRHHBBEEDDDDEEEE0000IIII11117777RRBBBBRRHHBBEEDDDDEEEE0000IIII11117777RRBBBBRRHHBBEEDDDDEEEE0000IIII11117777RRBBBBRRHHBBEEDDDDEEEE0000IIII11117777RRBBBBRRHHBBEEDDDDEEEE0000IIII11117777RRBBBBRRHHBBEEDDDDEEEE0000IIII11117777RRBBBBRRHHBBEEDDDDEEEE0000IIII11117777RRBBBBRRHHBBEEDDDDEEEE0000IIII11117777RRBBBBRRHHBBEEDDDDEEEE0000IIII11117777RRBBBBRRHHBBEEDDDDEEEE0000IIII11117777RRBBBBRRHHBBEEDDDDEEEE0000IIII11117777RRBBBBRRHHBBEEDDDDEEEE0000IIII11117777RRBBBBRRHHBBEEDDDDEEEE0000IIII11117777RRBBBBRRHHBBEEDDDDEEEE0000IIII11117777RRBBBBRRHHBBEEDDDDEEEE0000IIII11117777RRBBBBRRHHBBEEDDDDEEEE0000IIII11117777RRBBBBRRHHBBEEDDDDEEEE0000IIII11117777RRBBBBRRHHBBEEDDDDEEEE0000IIII11117777RRBB</div></div>
<div class="a t" style="left:1019.00px;top:254.00px;font-size:13px;line-height:13px;color:#000;letter-spacing:-0.223px;">Cap: 16035</div>
<div class="a t" style="left:1087.00px;top:254.00px;font-size:13px;line-height:13px;color:#555;letter-spacing:-0.044px;filter:url(#hb0)">Nazione: IT</div>
<div class="a" style="left:603px;top:399px;width:800px;height:18px;background:#d3d3d3"></div>
<div class="a" style="left:603px;top:399px;width:800px;height:1px;background:#000"></div>
<div class="a" style="left:603px;top:416px;width:800px;height:1px;background:#000"></div>
<div class="a" style="left:603px;top:437px;width:800px;height:1px;background:#000"></div>
<div class="a" style="left:603px;top:399px;width:1px;height:39px;background:#000"></div>
<div class="a" style="left:819px;top:399px;width:1px;height:39px;background:#000"></div>
<div class="a" style="left:880px;top:399px;width:1px;height:39px;background:#000"></div>
<div class="a" style="left:1095px;top:399px;width:1px;height:39px;background:#000"></div>
<div class="a" style="left:1186px;top:399px;width:1px;height:39px;background:#000"></div>
<div class="a" style="left:1402px;top:399px;width:1px;height:39px;background:#000"></div>
<div class="a t" style="left:661.03px;top:403.54px;font-size:10px;line-height:10px;color:#000;font-weight:bold;">Tipologia documento</div>
<div class="a t" style="left:834.44px;top:403.54px;font-size:10px;line-height:10px;color:#000;font-weight:bold;">Art. 73</div>
<div class="a t" style="left:940.77px;top:403.54px;font-size:10px;line-height:10px;color:#000;font-weight:bold;">Numero documento</div>
<div class="a t" style="left:1101.83px;top:403.54px;font-size:10px;line-height:10px;color:#000;font-weight:bold;">Data documento</div>
<div class="a t" style="left:1248.09px;top:403.54px;font-size:10px;line-height:10px;color:#000;font-weight:bold;">Codice destinatario</div>
<div class="a t" style="left:605.00px;top:421.00px;font-size:13px;line-height:13px;color:#000;">TD01 fattura</div>
<div class="a t" style="left:984.38px;top:421.00px;font-size:13px;line-height:13px;color:#000;">1</div>
<div class="a t" style="left:1107.75px;top:421.00px;font-size:13px;line-height:13px;color:#000;">30-01-2024</div>
<div class="a" style="left:1265px;top:417.00px;width:81px;height:21px;overflow:hidden;-webkit-mask-image:linear-gradient(to right,#000 70%,transparent)"><div class="a t" style="left:0;top:4px;font-size:13px;line-height:13px;font-weight:normal;color:#9a9a9a;letter-spacing:-2.2px;text-shadow:1.5px 0 0 rgba(90,90,90,.35),3px 0 0 rgba(110,110,110,.18);filter:url(#hb0)">BBRRHHBBEEDDDDEEEE0000IIII11117777RRBBBBRRHHBBEEDDDDEEEE0000IIII11117777RRBBBBRRHHBBEEDDDDEEEE0000IIII11117777RRBBBBRRHHBBEEDDDDEEEE0000IIII11117777RRBBBBRRHHBBEEDDDDEEEE0000IIII11117777RRBBBBRRHHBBEEDDDDEEEE0000IIII11117777RRBBBBRRHHBBEEDDDDEEEE0000IIII11117777RRBBBBRRHHBBEEDDDDEEEE0000IIII11117777RRBBBBRRHHBBEEDDDDEEEE0000IIII11117777RRBBBBRRHHBBEEDDDDEEEE0000IIII11117777RRBBBBRRHHBBEEDDDDEEEE0000IIII11117777RRBBBBRRHHBBEEDDDDEEEE0000IIII11117777RRBBBBRRHHBBEEDDDDEEEE0000IIII11117777RRBBBBRRHHBBEEDDDDEEEE0000IIII11117777RRBBBBRRHHBBEEDDDDEEEE0000IIII11117777RRBBBBRRHHBBEEDDDDEEEE0000IIII11117777RRBBBBRRHHBBEEDDDDEEEE0000IIII11117777RRBBBBRRHHBBEEDDDDEEEE0000IIII11117777RRBBBBRRHHBBEEDDDDEEEE0000IIII11117777RRBBBBRRHHBBEEDDDDEEEE0000IIII11117777RRBB</div></div>
<div class="a" style="left:603px;top:458px;width:800px;height:29px;background:#d3d3d3"></div>
<div class="a" style="left:603px;top:458px;width:800px;height:1px;background:#000"></div>
<div class="a" style="left:603px;top:487px;width:800px;height:1px;background:#000"></div>
<div class="a" style="left:603px;top:526px;width:800px;height:1px;background:#000"></div>
<div class="a" style="left:603px;top:458px;width:1px;height:69px;background:#000"></div>
<div class="a" style="left:694px;top:458px;width:1px;height:69px;background:#000"></div>
<div class="a" style="left:946px;top:458px;width:1px;height:69px;background:#000"></div>
<div class="a" style="left:1037px;top:458px;width:1px;height:69px;background:#000"></div>
<div class="a" style="left:1128px;top:458px;width:1px;height:69px;background:#000"></div>
<div class="a" style="left:1179px;top:458px;width:1px;height:69px;background:#000"></div>
<div class="a" style="left:1240px;top:458px;width:1px;height:69px;background:#000"></div>
<div class="a" style="left:1291px;top:458px;width:1px;height:69px;background:#000"></div>
<div class="a" style="left:1402px;top:458px;width:1px;height:69px;background:#000"></div>
<div class="a t" style="left:618.44px;top:468.54px;font-size:10px;line-height:10px;color:#000;font-weight:bold;">Cod. articolo</div>
<div class="a t" style="left:792.43px;top:468.54px;font-size:10px;line-height:10px;color:#000;font-weight:bold;">Descrizione</div>
<div class="a t" style="left:971.72px;top:468.54px;font-size:10px;line-height:10px;color:#000;font-weight:bold;">Quantità</div>
<div class="a t" style="left:1047.16px;top:468.54px;font-size:10px;line-height:10px;color:#000;font-weight:bold;">Prezzo unitario</div>
<div class="a t" style="left:1146.22px;top:468.54px;font-size:10px;line-height:10px;color:#000;font-weight:bold;">UM</div>
<div class="a t" style="left:1253.59px;top:468.54px;font-size:10px;line-height:10px;color:#000;font-weight:bold;">%IVA</div>
<div class="a t" style="left:1316.16px;top:468.54px;font-size:10px;line-height:10px;color:#000;font-weight:bold;">Prezzo totale</div>
<div class="a t" style="left:1188.61px;top:461.54px;font-size:10px;line-height:10px;color:#000;font-weight:bold;">Sconto o</div>
<div class="a t" style="left:1195.27px;top:475.54px;font-size:10px;line-height:10px;color:#000;font-weight:bold;">magg.</div>
<div class="a" style="left:695px;top:489.00px;width:232px;height:21px;overflow:hidden;-webkit-mask-image:linear-gradient(to right,#000 70%,transparent)"><div class="a t" style="left:0;top:4px;font-size:13px;line-height:13px;font-weight:normal;color:#6a6a6a;letter-spacing:-2.2px;text-shadow:1.5px 0 0 rgba(90,90,90,.35),3px 0 0 rgba(110,110,110,.18);filter:url(#hb0)">BBRRHHBBEEDDDDEEEE0000IIII11117777RRBBBBRRHHBBEEDDDDEEEE0000IIII11117777RRBBBBRRHHBBEEDDDDEEEE0000IIII11117777RRBBBBRRHHBBEEDDDDEEEE0000IIII11117777RRBBBBRRHHBBEEDDDDEEEE0000IIII11117777RRBBBBRRHHBBEEDDDDEEEE0000IIII11117777RRBBBBRRHHBBEEDDDDEEEE0000IIII11117777RRBBBBRRHHBBEEDDDDEEEE0000IIII11117777RRBBBBRRHHBBEEDDDDEEEE0000IIII11117777RRBBBBRRHHBBEEDDDDEEEE0000IIII11117777RRBBBBRRHHBBEEDDDDEEEE0000IIII11117777RRBBBBRRHHBBEEDDDDEEEE0000IIII11117777RRBBBBRRHHBBEEDDDDEEEE0000IIII11117777RRBBBBRRHHBBEEDDDDEEEE0000IIII11117777RRBBBBRRHHBBEEDDDDEEEE0000IIII11117777RRBBBBRRHHBBEEDDDDEEEE0000IIII11117777RRBBBBRRHHBBEEDDDDEEEE0000IIII11117777RRBBBBRRHHBBEEDDDDEEEE0000IIII11117777RRBBBBRRHHBBEEDDDDEEEE0000IIII11117777RRBBBBRRHHBBEEDDDDEEEE0000IIII11117777RRBB</div></div>
<div class="a" style="left:670px;top:505.00px;width:258px;height:21px;overflow:hidden;-webkit-mask-image:linear-gradient(to right,#000 75%,transparent)"><div class="a t" style="left:0;top:4px;font-size:13px;line-height:13px;font-weight:normal;color:#6a6a6a;letter-spacing:-2.2px;text-shadow:1.5px 0 0 rgba(90,90,90,.35),3px 0 0 rgba(110,110,110,.18);filter:url(#hb0)">BBRRHHBBEEDDDDEEEE0000IIII11117777RRBBBBRRHHBBEEDDDDEEEE0000IIII11117777RRBBBBRRHHBBEEDDDDEEEE0000IIII11117777RRBBBBRRHHBBEEDDDDEEEE0000IIII11117777RRBBBBRRHHBBEEDDDDEEEE0000IIII11117777RRBBBBRRHHBBEEDDDDEEEE0000IIII11117777RRBBBBRRHHBBEEDDDDEEEE0000IIII11117777RRBBBBRRHHBBEEDDDDEEEE0000IIII11117777RRBBBBRRHHBBEEDDDDEEEE0000IIII11117777RRBBBBRRHHBBEEDDDDEEEE0000IIII11117777RRBBBBRRHHBBEEDDDDEEEE0000IIII11117777RRBBBBRRHHBBEEDDDDEEEE0000IIII11117777RRBBBBRRHHBBEEDDDDEEEE0000IIII11117777RRBBBBRRHHBBEEDDDDEEEE0000IIII11117777RRBBBBRRHHBBEEDDDDEEEE0000IIII11117777RRBBBBRRHHBBEEDDDDEEEE0000IIII11117777RRBBBBRRHHBBEEDDDDEEEE0000IIII11117777RRBBBBRRHHBBEEDDDDEEEE0000IIII11117777RRBBBBRRHHBBEEDDDDEEEE0000IIII11117777RRBBBBRRHHBBEEDDDDEEEE0000IIII11117777RRBB</div></div>
<div class="a t" style="left:1010.69px;top:493.00px;font-size:13px;line-height:13px;color:#000;">1,00</div>
<div class="a t" style="left:1076.39px;top:493.00px;font-size:13px;line-height:13px;color:#000;">5.500,00</div>
<div class="a t" style="left:1256.45px;top:493.00px;font-size:13px;line-height:13px;color:#000;">22,00</div>
<div class="a t" style="left:1350.39px;top:493.00px;font-size:13px;line-height:13px;color:#000;">5.500,00</div>
<div class="a" style="left:603px;top:547px;width:800px;height:17px;background:#e0ffff"></div>
<div class="a" style="left:603px;top:564px;width:800px;height:30px;background:#d3d3d3"></div>
<div class="a" style="left:603px;top:614px;width:800px;height:17px;background:#d3d3d3"></div>
<div class="a" style="left:603px;top:547px;width:800px;height:1px;background:#000"></div>
<div class="a" style="left:603px;top:563px;width:800px;height:1px;background:#000"></div>
<div class="a" style="left:603px;top:593px;width:800px;height:1px;background:#000"></div>
<div class="a" style="left:603px;top:614px;width:800px;height:1px;background:#000"></div>
<div class="a" style="left:603px;top:630px;width:800px;height:1px;background:#000"></div>
<div class="a" style="left:603px;top:651px;width:800px;height:1px;background:#000"></div>
<div class="a" style="left:603px;top:547px;width:1px;height:105px;background:#000"></div>
<div class="a" style="left:1402px;top:547px;width:1px;height:105px;background:#000"></div>
<div class="a" style="left:857px;top:563px;width:1px;height:52px;background:#000"></div>
<div class="a" style="left:918px;top:563px;width:1px;height:52px;background:#000"></div>
<div class="a" style="left:1002px;top:563px;width:1px;height:52px;background:#000"></div>
<div class="a" style="left:1063px;top:563px;width:1px;height:52px;background:#000"></div>
<div class="a" style="left:1233px;top:563px;width:1px;height:52px;background:#000"></div>
<div class="a" style="left:772px;top:614px;width:1px;height:38px;background:#000"></div>
<div class="a" style="left:1002px;top:614px;width:1px;height:38px;background:#000"></div>
<div class="a" style="left:1063px;top:614px;width:1px;height:38px;background:#000"></div>
<div class="a t" style="left:941.23px;top:551.53px;font-size:10px;line-height:10px;color:#000;font-weight:bold;">RIEPILOGHI IVA E TOTALI</div>
<div class="a t" style="left:646.59px;top:574.53px;font-size:10px;line-height:10px;color:#000;font-weight:bold;">esigibilità iva / riferimenti normativi</div>
<div class="a t" style="left:875.59px;top:574.53px;font-size:10px;line-height:10px;color:#000;font-weight:bold;">%IVA</div>
<div class="a t" style="left:1024.38px;top:574.53px;font-size:10px;line-height:10px;color:#000;font-weight:bold;">Arr.</div>
<div class="a t" style="left:1107.76px;top:574.53px;font-size:10px;line-height:10px;color:#000;font-weight:bold;">Totale imponibile</div>
<div class="a t" style="left:1283.09px;top:574.53px;font-size:10px;line-height:10px;color:#000;font-weight:bold;">Totale imposta</div>
<div class="a t" style="left:945.77px;top:567.53px;font-size:10px;line-height:10px;color:#000;font-weight:bold;">Spese</div>
<div class="a t" style="left:934.64px;top:580.53px;font-size:10px;line-height:10px;color:#000;font-weight:bold;">accessorie</div>
<div class="a t" style="left:605.00px;top:598.00px;font-size:13px;line-height:13px;color:#000;">Esigib. non dich. (si presume immediata)</div>
<div class="a t" style="left:883.45px;top:598.00px;font-size:13px;line-height:13px;color:#000;">22,00</div>
<div class="a t" style="left:1181.39px;top:598.00px;font-size:13px;line-height:13px;color:#000;">5.500,00</div>
<div class="a t" style="left:1350.39px;top:598.00px;font-size:13px;line-height:13px;color:#000;">1.210,00</div>
<div class="a t" style="left:656.05px;top:618.53px;font-size:10px;line-height:10px;color:#000;font-weight:bold;">Importo bollo</div>
<div class="a t" style="left:834.16px;top:618.53px;font-size:10px;line-height:10px;color:#000;font-weight:bold;">Sconto/Maggiorazione</div>
<div class="a t" style="left:1024.38px;top:618.53px;font-size:10px;line-height:10px;color:#000;font-weight:bold;">Arr.</div>
<div class="a t" style="left:1190.31px;top:618.53px;font-size:10px;line-height:10px;color:#000;font-weight:bold;">Totale documento</div>
<div class="a t" style="left:1350.39px;top:635.00px;font-size:13px;line-height:13px;color:#000;">6.710,00</div>
<div class="a" style="left:603px;top:672px;width:800px;height:17px;background:#d3d3d3"></div>
<div class="a" style="left:603px;top:672px;width:800px;height:1px;background:#000"></div>
<div class="a" style="left:603px;top:688px;width:800px;height:1px;background:#000"></div>
<div class="a" style="left:603px;top:709px;width:800px;height:1px;background:#000"></div>
<div class="a" style="left:603px;top:672px;width:1px;height:38px;background:#000"></div>
<div class="a" style="left:814px;top:672px;width:1px;height:38px;background:#000"></div>
<div class="a" style="left:1100px;top:672px;width:1px;height:38px;background:#000"></div>
<div class="a" style="left:1291px;top:672px;width:1px;height:38px;background:#000"></div>
<div class="a" style="left:1402px;top:672px;width:1px;height:38px;background:#000"></div>
<div class="a t" style="left:660.66px;top:676.53px;font-size:10px;line-height:10px;color:#000;font-weight:bold;">Modalità pagamento</div>
<div class="a t" style="left:939.16px;top:676.53px;font-size:10px;line-height:10px;color:#000;font-weight:bold;">Dettagli</div>
<div class="a t" style="left:1172.93px;top:676.53px;font-size:10px;line-height:10px;color:#000;font-weight:bold;">Scadenze</div>
<div class="a t" style="left:1328.39px;top:676.53px;font-size:10px;line-height:10px;color:#000;font-weight:bold;">Importo</div>
<div class="a" style="left:605px;top:690.00px;width:112px;height:21px;overflow:hidden;-webkit-mask-image:linear-gradient(to right,#000 65%,transparent)"><div class="a t" style="left:0;top:4px;font-size:13px;line-height:13px;font-weight:normal;color:#8a8a8a;letter-spacing:-2.2px;text-shadow:1.5px 0 0 rgba(90,90,90,.35),3px 0 0 rgba(110,110,110,.18);filter:url(#hb0)">BBRRHHBBEEDDDDEEEE0000IIII11117777RRBBBBRRHHBBEEDDDDEEEE0000IIII11117777RRBBBBRRHHBBEEDDDDEEEE0000IIII11117777RRBBBBRRHHBBEEDDDDEEEE0000IIII11117777RRBBBBRRHHBBEEDDDDEEEE0000IIII11117777RRBBBBRRHHBBEEDDDDEEEE0000IIII11117777RRBBBBRRHHBBEEDDDDEEEE0000IIII11117777RRBBBBRRHHBBEEDDDDEEEE0000IIII11117777RRBBBBRRHHBBEEDDDDEEEE0000IIII11117777RRBBBBRRHHBBEEDDDDEEEE0000IIII11117777RRBBBBRRHHBBEEDDDDEEEE0000IIII11117777RRBBBBRRHHBBEEDDDDEEEE0000IIII11117777RRBBBBRRHHBBEEDDDDEEEE0000IIII11117777RRBBBBRRHHBBEEDDDDEEEE0000IIII11117777RRBBBBRRHHBBEEDDDDEEEE0000IIII11117777RRBBBBRRHHBBEEDDDDEEEE0000IIII11117777RRBBBBRRHHBBEEDDDDEEEE0000IIII11117777RRBBBBRRHHBBEEDDDDEEEE0000IIII11117777RRBBBBRRHHBBEEDDDDEEEE0000IIII11117777RRBBBBRRHHBBEEDDDDEEEE0000IIII11117777RRBB</div></div>
<div class="a t" style="left:1102.00px;top:694.00px;font-size:13px;line-height:13px;color:#000;">Data scadenza 30-01-2024</div>
<div class="a t" style="left:1350.39px;top:694.00px;font-size:13px;line-height:13px;color:#000;">6.710,00</div>
<div class="a" style="left:1045px;top:1074px;width:125px;height:30px;background:#f3f3f3"></div>
<div class="a" style="left:1046px;top:1075px;width:123px;height:28px;background:#f9f9f9;border:1px solid #e3e3e3;border-radius:4px"></div>
<div class="a t" style="left:1080.00px;top:1084.42px;font-size:12.5px;line-height:12.5px;color:#6d6d6d;letter-spacing:0.018px;">Fattura Prec</div>
<div class="a" style="left:1066px;top:1089px;width:4.5px;height:1.2px;background:#6d6d6d"></div>
<div class="a" style="left:1070px;top:1088px;width:3px;height:3px;background:#6d6d6d"></div>
<div class="a" style="left:1072.5px;top:1087px;width:2px;height:5px;background:#6d6d6d"></div>
<div class="a" style="left:1180px;top:1074px;width:125px;height:30px;background:#f3f3f3"></div>
<div class="a" style="left:1181px;top:1075px;width:123px;height:28px;background:#f9f9f9;border:1px solid #e3e3e3;border-radius:4px"></div>
<div class="a t" style="left:1200.00px;top:1084.42px;font-size:12.5px;line-height:12.5px;color:#6d6d6d;letter-spacing:-0.156px;">Fattura Succ</div>
<div class="a" style="left:1275px;top:1087px;width:2px;height:5px;background:#6d6d6d"></div>
<div class="a" style="left:1277px;top:1088px;width:3px;height:3px;background:#6d6d6d"></div>
<div class="a" style="left:1280px;top:1089px;width:4.5px;height:1.2px;background:#6d6d6d"></div>
<div class="a" style="left:1320px;top:1074px;width:28px;height:30px;background:#f3f3f3"></div>
<div class="a" style="left:1321px;top:1075px;width:26px;height:28px;background:#fff;border:1px solid #d0d0d0;border-radius:4px"></div>
<div class="a t" style="left:1330.20px;top:1083.00px;font-size:13px;line-height:13px;color:#000;-webkit-text-stroke:0.3px #000">−</div>
<div class="a" style="left:1353px;top:1074px;width:54px;height:30px;background:#f0f0f0;border-top:2px solid #606060;border-left:2px solid #606060;border-right:1px solid #e0e0e0;border-bottom:1px solid #e0e0e0"></div>
<div class="a t" style="left:1364.50px;top:1084.42px;font-size:12.5px;line-height:12.5px;color:#000;letter-spacing:-0.246px;">100%</div>
<div class="a" style="left:1413px;top:1074px;width:28px;height:30px;background:#f3f3f3"></div>
<div class="a" style="left:1414px;top:1075px;width:26px;height:28px;background:#fff;border:1px solid #d0d0d0;border-radius:4px"></div>
<div class="a t" style="left:1423.20px;top:1082.50px;font-size:13px;line-height:13px;color:#000;-webkit-text-stroke:0.2px #000">+</div>
<div class="a" style="left:0px;top:1128px;width:1914px;height:1px;background:#fcfcfc"></div>
<div class="a" style="left:0px;top:1129px;width:1914px;height:1px;background:#dadada"></div>
<div class="a" style="left:0px;top:1130px;width:1914px;height:21px;background:#f0f0f0"></div>
<div class="a" style="left:297px;top:1131px;width:1px;height:20px;background:#d5d5d5"></div>
<div class="a" style="left:497px;top:1131px;width:1px;height:20px;background:#d5d5d5"></div>
<div class="a t" style="left:0.00px;top:1135.84px;font-size:12px;line-height:12px;color:#000;letter-spacing:-0.270px;">Fattura visualizzata</div>
<div class="a t" style="left:302.00px;top:1135.84px;font-size:12px;line-height:12px;color:#000;letter-spacing:-0.129px;">Autore: Roberto Ferri</div>
<div class="a t" style="left:501.00px;top:1135.84px;font-size:12px;line-height:12px;color:#000;letter-spacing:-0.338px;">Versione 1.0.0</div>
</body></html>
